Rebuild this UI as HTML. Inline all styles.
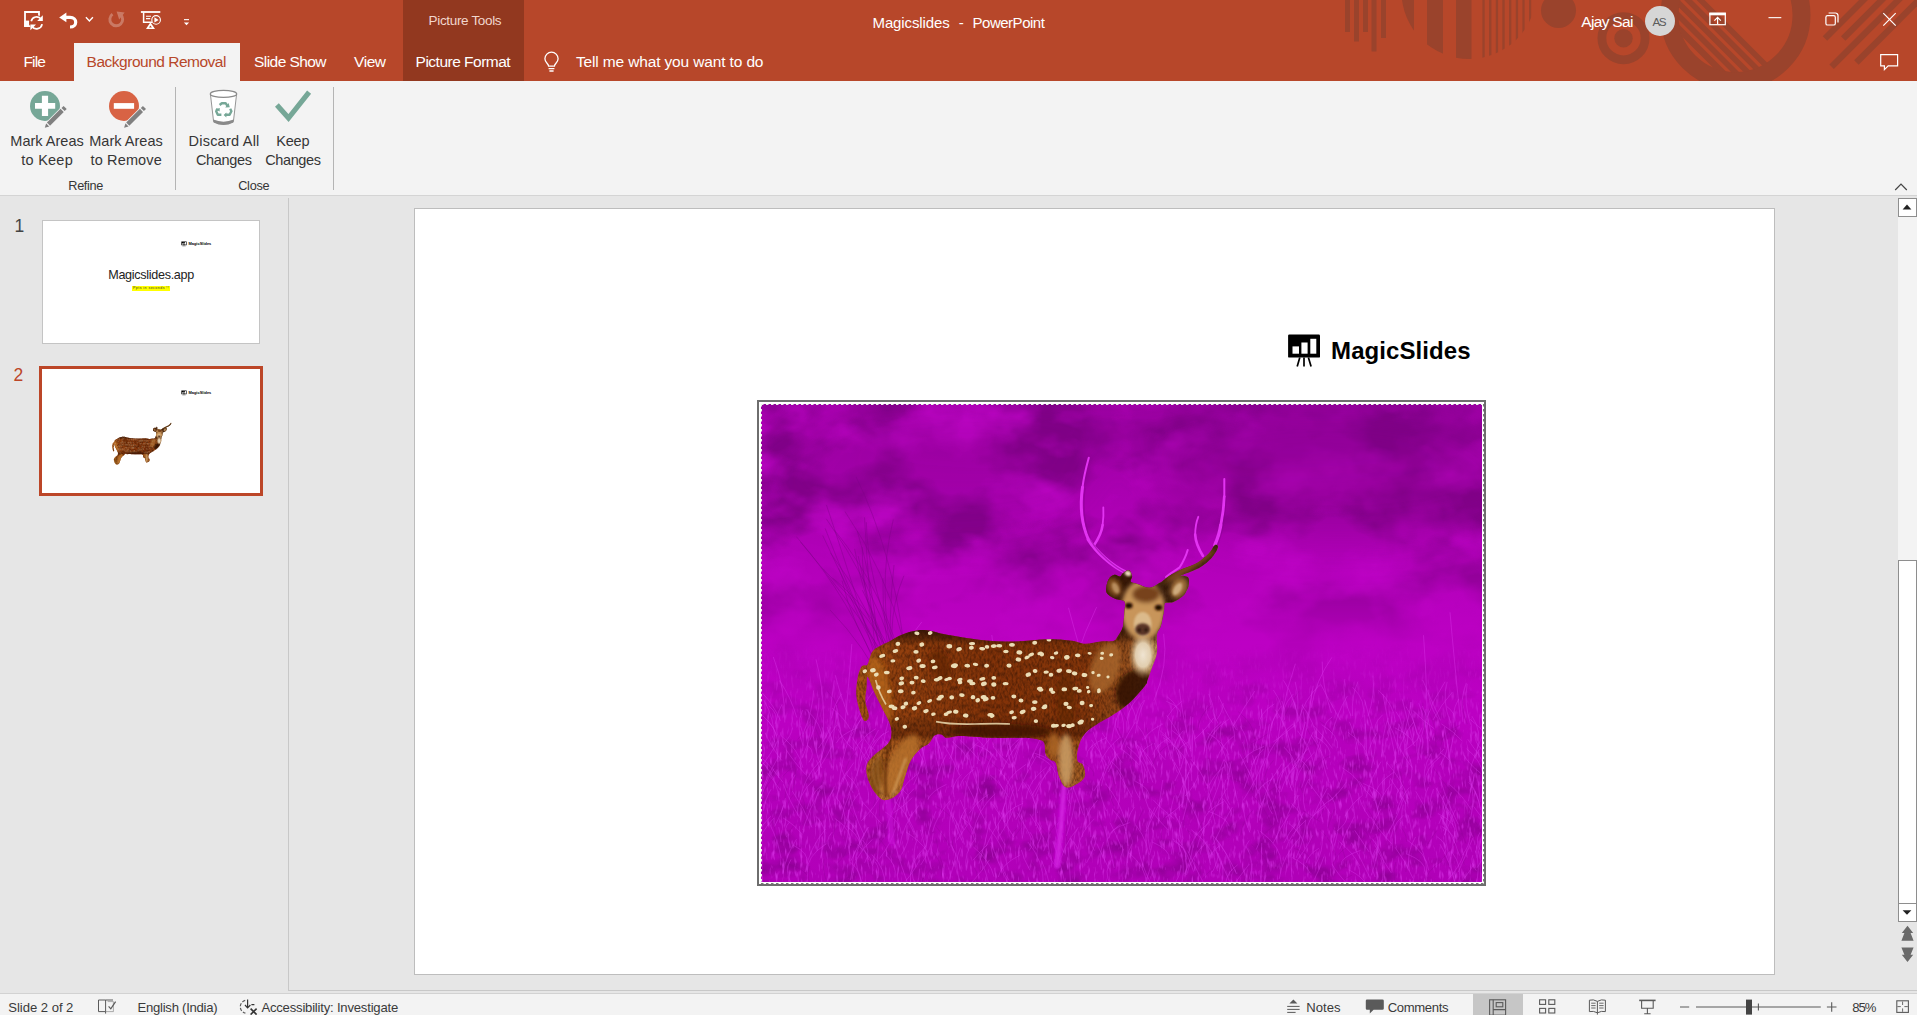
<!DOCTYPE html>
<html lang="en"><head><meta charset="utf-8"><title>Magicslides - PowerPoint</title>
<style>
html,body{margin:0;padding:0}
body{width:1917px;height:1015px;overflow:hidden;background:#E6E6E6;position:relative;
 font-family:"Liberation Sans",sans-serif;color:#333;font-size:14.5px}
.abs{position:absolute}
.t{position:absolute;white-space:nowrap;line-height:1}
#titlebar{left:0;top:0;width:1917px;height:81px;background:#B7472A}
#ptools{left:403px;top:0;width:121px;height:81px;background:#92381F}
#tabact{left:74px;top:43px;width:166px;height:38px;background:#F3F3F3}
#ribbon{left:0;top:81px;width:1917px;height:114px;background:#F3F3F3}
#ribline{left:0;top:195px;width:1917px;height:1px;background:#D4D4D4}
.sep{width:1px;background:#B4B4B4;top:87px;height:103px}
#leftdiv{left:288px;top:198px;width:1px;height:793px;background:#C8C8C8}
#botline{left:289px;top:990px;width:1628px;height:1px;background:#C8C8C8}
#status{left:0;top:994px;width:1917px;height:21px;background:#F3F3F3}
#statusline{left:0;top:993px;width:1917px;height:1px;background:#D2D2D2}
#slide{left:414px;top:208px;width:1359px;height:765px;background:#fff;border:1px solid #BDBDBD}
#th1{left:42px;top:220px;width:216px;height:122px;background:#fff;border:1px solid #C4C4C4}
#th2{left:39px;top:366px;width:218px;height:124px;background:#fff;border:3px solid #BC4628}
#vscroll{left:1898px;top:198px;width:19px;height:724px;background:#F3F3F3}
.sbtn{left:1898px;width:17px;height:17px;background:#fff;border:1px solid #8E8E8E}
#sthumb{left:1898px;top:560px;width:17px;height:342px;background:#fff;border:1px solid #8E8E8E}
.w{color:#fff}
svg{position:absolute;overflow:visible}
</style></head>
<body>
<div id="titlebar" class="abs"></div>
<svg class="abs" style="left:0;top:0" width="1917" height="81" viewBox="0 0 1917 81"><g fill="#9A432C"><clipPath id="cpA"><circle cx="1469" cy="-8.5" r="67.5"/></clipPath><clipPath id="cpB"><circle cx="1735.5" cy="15" r="57.6"/></clipPath><clipPath id="cpT"><rect x="0" y="0" width="1917" height="81"/></clipPath><rect x="1345" y="0" width="5" height="32"/><rect x="1354" y="0" width="5" height="41.5"/><rect x="1363" y="0" width="5" height="32"/><rect x="1371.5" y="0" width="5" height="51.5"/><rect x="1381" y="0" width="5" height="38"/><g clip-path="url(#cpA)"><rect x="1400" y="0" width="14" height="70"/><rect x="1427" y="0" width="16" height="70"/><rect x="1456" y="0" width="15.5" height="70"/><rect x="1482.4" y="0" width="2.3" height="70"/><rect x="1489" y="0" width="2.4" height="70"/><rect x="1495.8" y="0" width="2.3" height="70"/><rect x="1502.3" y="0" width="2.4" height="70"/><rect x="1509" y="0" width="2.3" height="70"/><rect x="1515.8" y="0" width="2.3" height="70"/><rect x="1522.4" y="0" width="2.2" height="70"/><rect x="1529" y="0" width="2.2" height="70"/></g><circle cx="1558.5" cy="10.5" r="17.5"/><circle cx="1623.5" cy="38.2" r="21.6" fill="none" stroke="#9A432C" stroke-width="8.8"/><circle cx="1623.5" cy="38.2" r="9.2"/><g clip-path="url(#cpT)"><circle cx="1735.5" cy="15" r="66" fill="none" stroke="#9A432C" stroke-width="18"/><g clip-path="url(#cpB)"><polygon points="1585.5,-60 1594.5,-60 1754.5,100 1745.5,100"/><polygon points="1599.1,-60 1607,-60 1767,100 1759.1,100"/><polygon points="1611.6,-60 1619.5,-60 1779.5,100 1771.6,100"/><polygon points="1624.1,-60 1632,-60 1792,100 1784.1,100"/><polygon points="1636.6,-60 1644.5,-60 1804.5,100 1796.6,100"/></g><polygon points="1822.78,36.275 1827.22,40.725 1907.22,-39.275 1902.78,-43.725"/><polygon points="1840.98,36.275 1845.42,40.725 1925.42,-39.275 1920.98,-43.725"/><polygon points="1829.38,64.475 1833.82,68.925 1913.82,-11.075 1909.38,-15.525"/><polygon points="1854.17,60.175 1858.62,64.625 1938.62,-15.375 1934.17,-19.825"/></g></g></svg>
<div id="ptools" class="abs"></div>
<div id="tabact" class="abs"></div>
<span class="t " style="left:428.60px;top:14.07px;font-size:13.50px;color:#F1D6CD;letter-spacing:-0.337px;">Picture Tools</span>
<span class="t " style="left:872.50px;top:15.30px;font-size:15.00px;color:#fff;letter-spacing:-0.116px;">Magicslides</span>
<span class="t " style="left:958.80px;top:15.30px;font-size:15.00px;color:#fff;">-</span>
<span class="t " style="left:972.50px;top:15.30px;font-size:15.00px;color:#fff;letter-spacing:-0.479px;">PowerPoint</span>
<span class="t " style="left:1581.30px;top:14.18px;font-size:15.50px;color:#fff;letter-spacing:-0.680px;">Ajay Sai</span>
<div class="abs" style="left:1645px;top:6px;width:30px;height:30px;border-radius:15px;background:#D6D6D6"></div>
<span class="t " style="left:1652.40px;top:15.70px;font-size:11.70px;color:#5C5C5C;letter-spacing:-1.508px;">AS</span>
<span class="t " style="left:23.40px;top:54.08px;font-size:15.50px;color:#fff;letter-spacing:-0.825px;">File</span>
<span class="t " style="left:86.60px;top:54.28px;font-size:15.50px;color:#B7472A;letter-spacing:-0.493px;">Background Removal</span>
<span class="t " style="left:254.10px;top:54.28px;font-size:15.50px;color:#fff;letter-spacing:-0.572px;">Slide Show</span>
<span class="t " style="left:354.10px;top:54.28px;font-size:15.50px;color:#fff;letter-spacing:-0.472px;">View</span>
<span class="t " style="left:415.60px;top:54.48px;font-size:15.50px;color:#fff;letter-spacing:-0.510px;">Picture Format</span>
<span class="t " style="left:575.90px;top:54.08px;font-size:15.50px;color:#fff;letter-spacing:-0.141px;">Tell me what you want to do</span>
<svg class="abs" style="left:20px;top:8px" width="28" height="24" viewBox="20 8 28 24" ><path d="M31,26 H25 V12 H39 V17.5" fill="none" stroke="#fff" stroke-width="1.8"/><rect x="24.2" y="20.6" width="5" height="6.2" fill="#fff"/><circle cx="36.7" cy="22.8" r="7.5" fill="#B7472A"/><path d="M31.2,21.2 A5.6,5.6 0 0 1 41.2,19.2" fill="none" stroke="#fff" stroke-width="1.7"/><path d="M42.1,24.2 A5.6,5.6 0 0 1 32,26.4" fill="none" stroke="#fff" stroke-width="1.7"/><path d="M42.8,15.2 V21 H37.2 Z" fill="#fff"/><path d="M30.4,30.2 V24.6 H36 Z" fill="#fff"/></svg>
<svg class="abs" style="left:56px;top:8px" width="40" height="24" viewBox="56 8 40 24" ><path d="M59.2,17.4 L66.4,12.6 V22.2 Z" fill="#fff"/><path d="M65,17.4 H70 C77.6,17.4 77.6,27 70,27" fill="none" stroke="#fff" stroke-width="3.2"/><path d="M85.9,17.3 L89.4,21 L92.9,17.3" fill="none" stroke="#fff" stroke-width="1.4"/></svg>
<svg class="abs" style="left:104px;top:8px" width="24" height="24" viewBox="104 8 24 24" ><g opacity="0.27"><path d="M112.5,14.2 A6.4,6.4 0 1 0 120.5,14.6" fill="none" stroke="#fff" stroke-width="2.9"/><path d="M116.6,11.6 L124.6,12.6 L119.2,19.6 Z" fill="#fff"/></g></svg>
<svg class="abs" style="left:138px;top:8px" width="26" height="24" viewBox="138 8 26 24" ><rect x="140.9" y="11.1" width="19.4" height="1.8" fill="#fff"/><path d="M143.6,12.5 V22.3 H152" fill="none" stroke="#fff" stroke-width="1.5"/><path d="M146,16.2 H151 M146,18.6 H150.2" stroke="#fff" stroke-width="1.1"/><circle cx="156.1" cy="19.9" r="4.3" fill="none" stroke="#fff" stroke-width="1.1"/><path d="M154.4,17.2 L158.6,19.9 L154.4,22.6 Z" fill="#fff"/><path d="M150.4,22.3 L146,29 H155 Z M150.4,25.6 L149,27.6 H151.9 Z" fill="#fff" fill-rule="evenodd"/></svg>
<svg class="abs" style="left:182px;top:16px" width="10" height="12" viewBox="182 16 10 12" ><rect x="184" y="19.1" width="5" height="1.1" fill="#fff"/><path d="M183.9,22.6 H189.1 L186.5,25.2 Z" fill="#fff"/></svg>
<svg class="abs" style="left:540px;top:50px" width="24" height="26" viewBox="540 50 24 26" ><path d="M548.6,66.2 C548.6,63.6 544.9,62.6 544.9,58.8 A6.6,6.6 0 0 1 558.1,58.8 C558.1,62.6 554.4,63.6 554.4,66.2 Z" fill="none" stroke="#fff" stroke-width="1.3"/><path d="M548.6,68.6 H554.4 M549.4,71 H553.6" stroke="#fff" stroke-width="1.3"/></svg>
<svg class="abs" style="left:1706px;top:10px" width="24" height="18" viewBox="1706 10 24 18" ><rect x="1709.9" y="13.3" width="15.4" height="11.4" fill="none" stroke="#fff" stroke-width="1.2"/><rect x="1709.3" y="12.7" width="16.6" height="2.6" fill="#fff"/><path d="M1717.6,24 V17.6 M1714.4,20.6 L1717.6,17.4 L1720.8,20.6" fill="none" stroke="#fff" stroke-width="1.2"/></svg>
<svg class="abs" style="left:1765px;top:10px" width="20" height="16" viewBox="1765 10 20 16" ><rect x="1768.5" y="17.1" width="12.8" height="1.1" fill="#fff"/></svg>
<svg class="abs" style="left:1822px;top:10px" width="20" height="18" viewBox="1822 10 20 18" ><rect x="1825.9" y="15.6" width="9.4" height="9.4" rx="1.6" fill="none" stroke="#fff" stroke-width="1.2"/><path d="M1828.6,13 H1835.4 A2.6,2.6 0 0 1 1838,15.6 V22.6" fill="none" stroke="#fff" stroke-width="1.2"/></svg>
<svg class="abs" style="left:1880px;top:10px" width="20" height="18" viewBox="1880 10 20 18" ><path d="M1883.3,13.2 L1895.7,25.6 M1895.7,13.2 L1883.3,25.6" stroke="#fff" stroke-width="1.2" fill="none"/></svg>
<svg class="abs" style="left:1878px;top:52px" width="24" height="22" viewBox="1878 52 24 22" ><path d="M1880.7,54.7 H1897.6 V65.8 H1888.2 L1884.4,69.6 V65.8 H1880.7 Z" fill="none" stroke="#fff" stroke-width="1.2"/></svg>
<div id="ribbon" class="abs"></div><div id="ribline" class="abs"></div>
<div class="abs sep" style="left:175px"></div><div class="abs sep" style="left:333px"></div>
<span class="t " style="left:10.30px;top:134.13px;font-size:14.50px;color:#363636;letter-spacing:0.008px;">Mark Areas</span>
<span class="t " style="left:21.30px;top:153.33px;font-size:14.50px;color:#363636;letter-spacing:0.236px;">to Keep</span>
<span class="t " style="left:89.20px;top:134.13px;font-size:14.50px;color:#363636;letter-spacing:0.030px;">Mark Areas</span>
<span class="t " style="left:90.50px;top:153.33px;font-size:14.50px;color:#363636;letter-spacing:0.148px;">to Remove</span>
<span class="t " style="left:188.50px;top:134.13px;font-size:14.50px;color:#363636;letter-spacing:0.231px;">Discard All</span>
<span class="t " style="left:196.00px;top:153.33px;font-size:14.50px;color:#363636;letter-spacing:-0.357px;">Changes</span>
<span class="t " style="left:276.30px;top:134.13px;font-size:14.50px;color:#363636;letter-spacing:-0.221px;">Keep</span>
<span class="t " style="left:265.20px;top:153.33px;font-size:14.50px;color:#363636;letter-spacing:-0.374px;">Changes</span>
<span class="t " style="left:68.30px;top:179.55px;font-size:12.70px;color:#363636;letter-spacing:-0.322px;">Refine</span>
<span class="t " style="left:238.20px;top:179.55px;font-size:12.70px;color:#363636;letter-spacing:-0.267px;">Close</span>
<svg class="abs" style="left:26px;top:86px" width="44" height="46" viewBox="26 86 44 46" ><circle cx="45" cy="106" r="15" fill="#76A797"/><path d="M35,103.1 H41.9 V95.8 H48.1 V103.1 H55.2 V108.8 H48.1 V116 H41.9 V108.8 H35 Z" fill="#fff"/><g stroke="#F3F3F3" stroke-width="1.6" stroke-linejoin="round" fill="#808080" paint-order="stroke"><polygon points="44.80,127.80 46.21,123.27 49.33,126.39"/><polygon points="46.92,122.57 60.64,108.85 63.75,111.96 50.03,125.68"/><polygon points="61.49,108.00 63.61,105.88 66.72,108.99 64.60,111.11"/></g></svg>
<svg class="abs" style="left:105px;top:86px" width="44" height="46" viewBox="105 86 44 46" ><circle cx="124" cy="106" r="15" fill="#D86344"/><rect x="113.8" y="103.1" width="20.3" height="5.7" fill="#fff"/><g stroke="#F3F3F3" stroke-width="1.6" stroke-linejoin="round" fill="#808080" paint-order="stroke"><polygon points="124.10,127.80 125.51,123.27 128.63,126.39"/><polygon points="126.22,122.57 139.94,108.85 143.05,111.96 129.33,125.68"/><polygon points="140.79,108.00 142.91,105.88 146.02,108.99 143.90,111.11"/></g></svg>
<svg class="abs" style="left:206px;top:86px" width="36" height="44" viewBox="206 86 36 44" ><path d="M210.4,94 L213.6,121.6 Q223.5,126.6 233.4,121.6 L236.6,94 Z" fill="#fff" stroke="#8A8A8A" stroke-width="0.9"/><path d="M213.3,119.6 Q223.5,123.8 233.7,119.6 L233.4,122.4 Q223.5,127.6 213.6,122.4 Z" fill="#8A8A8A"/><ellipse cx="223.5" cy="93.9" rx="13.2" ry="3.5" fill="#fff" stroke="#8A8A8A" stroke-width="1.2"/><g fill="none" stroke="#76A797" stroke-width="2.4" stroke-linejoin="round"><path d="M219.6,105 L221.8,103.2 H225.6 L227.6,106.2"/><path d="M230.2,108.8 L231.4,111.2 L229.6,114.8 H225.6"/><path d="M221.4,114.8 H217.8 L216.2,111.2 L217.6,108.6"/></g><path d="M225.2,107.4 L229.8,107.2 L228.6,103 Z M226.4,112.4 L226.4,117.4 L223.6,114.9 Z M215.4,109.2 L219.8,108 L219.6,111.6 Z" fill="#76A797"/></svg>
<svg class="abs" style="left:272px;top:88px" width="42" height="36" viewBox="272 88 42 36" ><path d="M276.9,105 L288.5,118 L309.1,92.2" fill="none" stroke="#76A797" stroke-width="5.1"/></svg>
<svg class="abs" style="left:1892px;top:180px" width="18" height="14" viewBox="1892 180 18 14" ><path d="M1895.2,190 L1901,184.2 L1906.8,190" fill="none" stroke="#444" stroke-width="1.2"/></svg>
<div id="leftdiv" class="abs"></div><div id="botline" class="abs"></div>
<span class="t " style="left:14.50px;top:217.99px;font-size:17.50px;color:#444;">1</span>
<span class="t " style="left:13.40px;top:366.79px;font-size:17.50px;color:#BC4628;">2</span>
<div id="th1" class="abs"></div><div id="th2" class="abs"></div>
<span class="t " style="left:108.20px;top:269.43px;font-size:12.60px;color:#222;letter-spacing:-0.303px;">Magicslides.app</span>
<div class="abs" style="left:131.6px;top:286.2px;width:38.5px;height:4.7px;background:#FFFF00"></div><span class="t " style="left:133.00px;top:287.05px;font-size:3.60px;color:#333;letter-spacing:0.434px;">Ppts in seconds !!</span>
<svg class="abs" style="left:180.55px;top:240.57px" width="31.34" height="6.27" viewBox="1286 332 190 38"><rect x="1288.1" y="334.6" width="31.9" height="23" rx="1.2" fill="#000"/><rect x="1292.5" y="346.4" width="6.5" height="7.3" fill="#fff"/><rect x="1301.4" y="342.5" width="6.2" height="11.2" fill="#fff"/><rect x="1310.3" y="338.8" width="6" height="14.9" fill="#fff"/><path d="M1299.8,357.4 L1297.2,366.5 M1304,357.4 V366.5 M1308.4,357.4 L1311.1,366.5" stroke="#000" stroke-width="1.7" fill="none"/><text x="1331.1" y="358.9" font-family="Liberation Sans, sans-serif" font-weight="bold" font-size="24" letter-spacing="0.078" fill="#000">MagicSlides</text></svg>
<svg class="abs" style="left:180.55px;top:389.67px" width="31.34" height="6.27" viewBox="1286 332 190 38"><rect x="1288.1" y="334.6" width="31.9" height="23" rx="1.2" fill="#000"/><rect x="1292.5" y="346.4" width="6.5" height="7.3" fill="#fff"/><rect x="1301.4" y="342.5" width="6.2" height="11.2" fill="#fff"/><rect x="1310.3" y="338.8" width="6" height="14.9" fill="#fff"/><path d="M1299.8,357.4 L1297.2,366.5 M1304,357.4 V366.5 M1308.4,357.4 L1311.1,366.5" stroke="#000" stroke-width="1.7" fill="none"/><text x="1331.1" y="358.9" font-family="Liberation Sans, sans-serif" font-weight="bold" font-size="24" letter-spacing="0.078" fill="#000">MagicSlides</text></svg>
<svg class="abs" style="left:0;top:0" width="300" height="520" viewBox="0 0 300 520"><g transform="translate(-28.06 333.50) scale(0.1638)"><use href="#deer"/></g></svg>
<div id="slide" class="abs"></div>
<svg class="abs" style="left:1286.00px;top:332.00px" width="190.00" height="38.00" viewBox="1286 332 190 38"><rect x="1288.1" y="334.6" width="31.9" height="23" rx="1.2" fill="#000"/><rect x="1292.5" y="346.4" width="6.5" height="7.3" fill="#fff"/><rect x="1301.4" y="342.5" width="6.2" height="11.2" fill="#fff"/><rect x="1310.3" y="338.8" width="6" height="14.9" fill="#fff"/><path d="M1299.8,357.4 L1297.2,366.5 M1304,357.4 V366.5 M1308.4,357.4 L1311.1,366.5" stroke="#000" stroke-width="1.7" fill="none"/><text x="1331.1" y="358.9" font-family="Liberation Sans, sans-serif" font-weight="bold" font-size="24" letter-spacing="0.078" fill="#000">MagicSlides</text></svg>
<svg class="abs" style="left:750px;top:395px" width="745" height="500" viewBox="750 395 745 500"><defs><clipPath id="deerclip"><path d="M889.2,641.5C892.8,639.6 895.7,637.3 900.0,635.5C904.3,633.7 908.2,632.3 913.0,631.3C917.8,630.3 920.5,629.6 926.6,630.2C932.7,630.8 937.2,633.0 947.0,634.7C956.8,636.4 968.8,638.7 981.0,639.9C993.2,641.1 1002.8,641.6 1015.0,641.5C1027.2,641.4 1038.8,639.4 1049.0,639.3C1059.2,639.2 1065.1,640.0 1071.6,640.8C1078.1,641.6 1079.9,643.7 1085.2,643.8C1090.5,643.9 1096.0,642.0 1101.0,641.5C1106.0,641.0 1110.2,642.0 1113.2,641.0C1116.2,640.0 1116.2,638.5 1117.9,636.2C1119.6,633.9 1121.4,631.0 1122.5,628.0C1123.6,625.0 1123.5,622.6 1123.8,619.7C1124.1,616.8 1124.2,614.6 1124.4,612.0C1124.6,609.4 1125.1,607.5 1125.0,605.5C1124.9,603.5 1125.5,602.0 1123.8,600.8C1122.1,599.6 1118.4,600.0 1115.6,598.9C1112.8,597.8 1110.2,596.4 1108.5,594.8C1106.8,593.2 1106.1,592.9 1106.1,590.1C1106.1,587.3 1107.0,582.3 1108.5,579.5C1110.0,576.7 1112.3,575.3 1114.4,574.8C1116.5,574.3 1118.5,576.7 1120.0,576.5C1121.5,576.3 1121.1,574.8 1122.6,573.6C1124.1,572.4 1126.9,569.6 1128.6,570.0C1130.3,570.4 1131.7,573.8 1132.1,575.9C1132.5,578.0 1129.8,580.3 1130.9,581.8C1132.0,583.3 1134.6,583.1 1138.0,584.2C1141.4,585.3 1146.0,588.0 1149.8,587.8C1153.6,587.6 1157.2,584.1 1159.3,583.0C1161.4,581.9 1159.6,583.3 1161.7,581.8C1163.8,580.3 1167.3,577.1 1171.1,574.8C1174.9,572.5 1178.2,570.9 1182.9,568.8C1187.6,566.7 1192.4,565.7 1197.1,562.9C1201.8,560.1 1205.7,556.7 1208.9,553.5C1212.1,550.3 1213.2,546.3 1214.8,545.2C1216.4,544.1 1218.5,545.3 1217.9,547.6C1217.3,549.9 1214.6,554.6 1211.3,558.2C1208.0,561.8 1204.2,564.9 1199.5,567.7C1194.8,570.5 1189.5,571.9 1185.3,573.6C1181.1,575.3 1177.3,577.0 1176.0,577.4C1174.7,577.8 1176.1,576.0 1178.2,575.9C1180.3,575.8 1185.8,575.6 1187.7,577.1C1189.6,578.6 1189.0,581.8 1188.8,584.2C1188.6,586.6 1187.7,588.4 1186.6,590.5C1185.5,592.6 1185.3,593.9 1182.9,596.0C1180.5,598.1 1176.7,600.6 1173.5,601.9C1170.3,603.2 1166.9,601.6 1165.2,603.1C1163.5,604.6 1164.5,607.3 1164.0,610.2C1163.5,613.1 1163.0,616.0 1162.4,619.0C1161.8,622.0 1161.5,623.9 1160.5,626.8C1159.5,629.7 1157.5,630.3 1156.9,635.0C1156.3,639.7 1157.7,647.0 1156.9,652.8C1156.1,658.6 1153.9,662.1 1152.2,667.0C1150.5,671.9 1148.8,676.6 1147.5,680.0C1146.2,683.4 1148.5,681.4 1145.0,685.7C1141.5,690.0 1134.2,698.5 1128.3,703.8C1122.4,709.1 1117.7,711.7 1112.4,715.2C1107.1,718.7 1103.7,719.8 1098.8,723.1C1093.9,726.4 1088.9,729.0 1085.2,733.3C1081.5,737.6 1079.8,742.0 1078.4,746.9C1077.0,751.8 1076.5,757.2 1077.3,760.5C1078.1,763.8 1081.6,762.1 1082.9,765.0C1084.2,767.9 1085.9,772.9 1084.7,776.4C1083.5,779.9 1079.5,782.4 1076.1,784.3C1072.7,786.2 1069.0,788.6 1065.9,787.2C1062.8,785.8 1060.9,780.8 1059.1,776.4C1057.3,772.0 1057.3,765.9 1055.7,762.8C1054.1,759.7 1051.9,761.0 1050.1,759.4C1048.3,757.8 1046.5,756.6 1045.5,753.7C1044.5,750.8 1045.4,745.9 1044.4,743.5C1043.4,741.1 1043.2,741.1 1039.9,740.1C1036.6,739.1 1034.9,738.2 1026.3,737.8C1017.7,737.4 1004.1,738.1 992.3,737.8C980.5,737.5 968.8,736.0 960.6,736.0C952.4,736.0 950.5,738.1 947.0,737.8C943.5,737.5 943.5,734.8 941.3,734.4C939.0,734.0 936.8,734.0 934.5,735.6C932.2,737.2 931.4,741.1 928.8,743.5C926.2,745.9 923.1,746.1 919.8,749.2C916.5,752.3 913.4,755.6 910.7,760.5C908.0,765.4 907.0,770.7 905.0,776.4C903.0,782.1 902.9,787.9 899.4,792.2C895.9,796.5 889.9,799.7 885.8,800.1C881.7,800.5 879.8,798.0 876.7,794.5C873.6,791.0 870.6,785.8 868.8,780.9C867.0,776.0 865.9,771.6 866.5,767.3C867.1,763.0 868.3,761.4 872.2,757.1C876.1,752.8 884.6,747.8 888.1,743.5C891.6,739.2 891.3,737.2 891.5,733.3C891.7,729.4 890.8,726.5 889.2,722.0C887.6,717.5 885.0,713.7 882.4,708.4C879.8,703.1 877.1,698.2 874.5,692.5C871.9,686.8 869.1,677.5 867.7,676.7C866.3,675.9 866.9,683.5 866.5,688.0C866.1,692.5 865.0,696.5 865.4,701.6C865.8,706.7 869.0,712.8 868.8,716.3C868.6,719.8 865.9,721.8 864.3,720.8C862.7,719.8 861.1,715.3 859.7,710.6C858.3,705.9 856.7,700.5 856.3,694.8C855.9,689.1 856.7,683.8 857.5,678.9C858.3,674.0 859.7,670.0 860.9,667.6C862.1,665.2 863.1,665.9 864.3,665.3C865.5,664.7 866.3,666.6 867.7,664.2C869.1,661.8 870.0,655.0 872.2,651.7C874.4,648.4 876.9,647.8 880.0,646.0C883.1,644.2 885.6,643.4 889.2,641.5Z"/></clipPath><linearGradient id="dg1" gradientUnits="userSpaceOnUse" x1="860" y1="0" x2="1160" y2="0"><stop offset="0" stop-color="#A65414"/><stop offset="0.12" stop-color="#93400E"/><stop offset="0.45" stop-color="#823208"/><stop offset="0.75" stop-color="#86360A"/><stop offset="0.9" stop-color="#95501E"/><stop offset="1" stop-color="#B98A52"/></linearGradient><linearGradient id="dg2" gradientUnits="userSpaceOnUse" x1="0" y1="630" x2="0" y2="800"><stop offset="0" stop-color="#2A1004" stop-opacity="0.85"/><stop offset="0.045" stop-color="#2A1004" stop-opacity="0.5"/><stop offset="0.09" stop-color="#2A1004" stop-opacity="0"/><stop offset="0.5" stop-color="#000" stop-opacity="0"/><stop offset="0.62" stop-color="#3A1404" stop-opacity="0.35"/><stop offset="0.66" stop-color="#C88A3C" stop-opacity="0.25"/><stop offset="1" stop-color="#D09850" stop-opacity="0.55"/></linearGradient><radialGradient id="dg3" gradientUnits="userSpaceOnUse" cx="1143" cy="655" r="24" gradientTransform="translate(1143 655) scale(0.62 1) translate(-1143 -655)"><stop offset="0" stop-color="#EFE4D2"/><stop offset="0.5" stop-color="#E6D4B6" stop-opacity="0.95"/><stop offset="1" stop-color="#C69A5E" stop-opacity="0"/></radialGradient><filter id="dblur" x="-20%" y="-20%" width="140%" height="140%"><feGaussianBlur stdDeviation="2.2"/></filter><filter id="dblur1" x="-20%" y="-20%" width="140%" height="140%"><feGaussianBlur stdDeviation="0.9"/></filter><filter id="fur" color-interpolation-filters="sRGB" filterUnits="userSpaceOnUse" x="850" y="540" width="380" height="270"><feTurbulence type="fractalNoise" baseFrequency="0.5 0.22" numOctaves="2" seed="3"/><feColorMatrix type="matrix" values="0 0 0 0 0.16  0 0 0 0 0.06  0 0 0 0 0.01  0 1.1 0 0 -0.38"/></filter><filter id="dblur0" x="-5%" y="-5%" width="110%" height="110%"><feGaussianBlur stdDeviation="0.35"/></filter><linearGradient id="bg" x1="0" y1="0" x2="0" y2="1"><stop offset="0" stop-color="#9E00A5"/><stop offset="0.1" stop-color="#A800AF"/><stop offset="0.35" stop-color="#B400BB"/><stop offset="0.5" stop-color="#BD00C4"/><stop offset="0.65" stop-color="#BC00C3"/><stop offset="0.8" stop-color="#B500BC"/><stop offset="1" stop-color="#B200B9"/></linearGradient><linearGradient id="mtop" x1="0" y1="0" x2="0" y2="1"><stop offset="0" stop-color="#fff"/><stop offset="0.28" stop-color="#fff" stop-opacity="0.9"/><stop offset="0.5" stop-color="#fff" stop-opacity="0.15"/><stop offset="1" stop-color="#fff" stop-opacity="0.04"/></linearGradient><linearGradient id="mbot" x1="0" y1="0" x2="0" y2="1"><stop offset="0" stop-color="#fff" stop-opacity="0"/><stop offset="0.5" stop-color="#fff" stop-opacity="0"/><stop offset="0.7" stop-color="#fff" stop-opacity="0.9"/><stop offset="1" stop-color="#fff"/></linearGradient><mask id="maskTop" maskUnits="userSpaceOnUse" x="761" y="404" width="721" height="478"><rect x="761" y="404" width="721" height="478" fill="url(#mtop)"/></mask><mask id="maskBot" maskUnits="userSpaceOnUse" x="761" y="404" width="721" height="478"><rect x="761" y="404" width="721" height="478" fill="url(#mbot)"/></mask><filter id="clouds" color-interpolation-filters="sRGB" filterUnits="userSpaceOnUse" x="761" y="404" width="721" height="478"><feTurbulence type="fractalNoise" baseFrequency="0.011 0.017" numOctaves="4" seed="4"/><feColorMatrix type="matrix" values="0 0 0 0 0.5  0 0 0 0 0  0 0 0 0 0.53  3.3 0 0 0 -1.35"/></filter><filter id="cloudl" color-interpolation-filters="sRGB" filterUnits="userSpaceOnUse" x="761" y="404" width="721" height="478"><feTurbulence type="fractalNoise" baseFrequency="0.013 0.02" numOctaves="4" seed="17"/><feColorMatrix type="matrix" values="0 0 0 0 0.77  0 0 0 0 0.02  0 0 0 0 0.8  0 2.6 0 0 -1.2"/></filter><filter id="grassn" color-interpolation-filters="sRGB" filterUnits="userSpaceOnUse" x="761" y="404" width="721" height="478"><feTurbulence type="fractalNoise" baseFrequency="0.035 0.05" numOctaves="3" seed="9"/><feColorMatrix type="matrix" values="0 0 0 0 0.5  0 0 0 0 0  0 0 0 0 0.53  0 1.8 0 0 -0.86"/></filter><filter id="grassl" color-interpolation-filters="sRGB" filterUnits="userSpaceOnUse" x="761" y="404" width="721" height="478"><feTurbulence type="fractalNoise" baseFrequency="0.33 0.10" numOctaves="2" seed="21"/><feColorMatrix type="matrix" values="0 0 0 0 0.84  0 0 0 0 0.2  0 0 0 0 0.9  0 0 2.6 0 -1.42"/></filter><filter id="bigblur" x="-30%" y="-60%" width="160%" height="220%"><feGaussianBlur stdDeviation="22"/></filter><clipPath id="picclip"><rect x="761" y="404" width="721" height="478"/></clipPath></defs><rect x="758" y="401" width="727" height="484" fill="#fff" stroke="#6E6E6E" stroke-width="2"/><g clip-path="url(#picclip)"><rect x="761" y="404" width="721" height="478" fill="url(#bg)"/><g mask="url(#maskTop)"><rect x="761" y="404" width="721" height="478" filter="url(#clouds)"/><rect x="761" y="404" width="721" height="478" filter="url(#cloudl)"/></g><g filter="url(#bigblur)" fill="#7C0084"><ellipse cx="1340" cy="475" rx="190" ry="62" opacity="0.42"/><ellipse cx="1150" cy="430" rx="340" ry="24" opacity="0.2"/><ellipse cx="930" cy="480" rx="170" ry="50" opacity="0.2"/></g><g mask="url(#maskBot)"><rect x="761" y="404" width="721" height="478" filter="url(#grassn)"/><rect x="761" y="404" width="721" height="478" filter="url(#grassl)"/></g><path d="M884.1,674.8 Q850.9,622.9 842.0,580.5M888.8,669.8 Q870.3,605.4 830.4,552.8M879.8,671.6 Q851.4,579.8 826.4,504.8M894.5,669.8 Q876.2,587.2 893.3,519.5M888.6,668.4 Q861.4,601.8 862.3,547.2M881.2,654.7 Q847.7,589.2 822.7,535.5M903.2,677.1 Q873.2,617.5 823.0,568.7M891.9,674.3 Q881.9,628.0 862.4,590.2M890.7,680.1 Q857.9,618.6 838.6,568.3M897.2,684.6 Q869.3,613.9 858.2,556.0M904.1,642.3 Q885.4,570.4 845.0,511.5M903.9,675.1 Q887.8,595.4 834.5,530.1M886.9,692.3 Q865.8,647.0 830.0,609.9M877.7,640.6 Q872.4,580.4 857.3,531.2M878.2,675.6 Q868.2,588.6 864.5,517.4M888.2,653.7 Q862.2,596.0 854.6,548.9M895.2,654.9 Q870.1,580.0 826.3,518.8M901.2,693.5 Q881.2,628.7 903.9,575.7M885.0,657.1 Q845.4,593.9 800.5,542.1M891.7,685.0 Q887.6,619.0 894.0,565.0M896.4,690.3 Q881.8,628.7 882.9,578.3M881.5,680.2 Q852.4,601.2 796.4,536.6M903.5,642.0 Q892.2,551.2 856.1,476.9M885.0,667.3 Q849.0,590.8 825.1,528.3M893.7,660.3 Q877.3,615.0 832.7,578.0M896.3,648.0 Q867.5,578.8 866.3,522.2" fill="none" stroke="#7E0086" stroke-width="0.8" opacity="0.5"/><path d="M1402.5,789.8 Q1390.7,737.1 1382.9,693.9M1153.9,700.8 Q1168.8,664.0 1163.6,633.8M1261.9,780.3 Q1263.4,749.2 1293.0,723.8M940.1,759.2 Q937.0,726.4 910.9,699.6M802.4,757.5 Q815.2,731.0 807.8,709.3M1062.4,718.4 Q1071.9,657.2 1096.6,607.1M1297.8,722.0 Q1296.2,699.1 1283.5,680.4M1331.4,713.0 Q1321.9,684.8 1322.2,661.7M1013.1,767.4 Q1024.0,729.4 1035.2,698.3M1427.4,753.0 Q1427.6,688.2 1423.5,635.2M901.9,718.4 Q922.1,680.9 931.6,650.3M1091.0,731.7 Q1092.7,695.3 1100.6,665.5M1484.8,761.9 Q1486.7,724.1 1494.3,693.1M1460.1,716.6 Q1454.1,659.2 1450.0,612.3M784.8,722.5 Q785.1,686.5 773.3,657.0M844.5,727.5 Q849.1,681.6 851.8,644.1M882.4,723.4 Q885.0,667.6 921.8,621.9M817.8,779.2 Q830.3,713.3 816.0,659.4M1191.8,781.2 Q1192.8,757.3 1163.4,737.7M1098.4,709.7 Q1080.8,653.7 1068.5,607.8M1300.5,766.8 Q1307.0,722.2 1313.2,685.7M945.9,731.6 Q950.0,682.2 932.3,641.8M1428.9,756.5 Q1428.3,727.2 1418.8,703.2M1082.8,735.4 Q1078.5,712.6 1080.1,693.9M838.6,788.8 Q842.8,732.8 876.1,686.9M1256.4,764.7 Q1266.1,731.8 1268.1,704.9M1190.7,749.1 Q1182.3,715.9 1179.3,688.8M1122.7,737.6 Q1128.6,706.5 1096.7,681.1M1017.3,779.7 Q1003.0,718.3 998.7,668.1M924.1,700.3 Q933.7,668.5 937.2,642.6M882.3,747.4 Q893.7,697.1 902.9,656.0M1311.1,707.8 Q1315.9,680.1 1331.9,657.4M1275.6,765.5 Q1279.4,709.5 1295.4,663.7M1417.4,760.3 Q1421.3,717.1 1445.1,681.7M1008.5,753.5 Q997.6,688.3 991.8,635.0M830.8,758.5 Q827.9,715.5 834.3,680.4" fill="none" stroke="#D630E6" stroke-width="0.9" opacity="0.5"/><path d="M929.6,738.9 Q924.8,728.2 910.8,719.5M1147.3,752.1 Q1149.3,738.5 1146.1,727.4M1336.0,855.8 Q1332.1,841.3 1320.0,829.4M1245.3,753.2 Q1242.8,742.8 1246.1,734.3M815.5,768.6 Q824.7,757.6 826.5,748.6M1376.8,871.8 Q1378.3,853.3 1377.2,838.2M776.2,842.5 Q775.7,826.0 770.0,812.4M825.8,879.4 Q821.9,868.2 824.1,859.1M1394.8,882.0 Q1392.5,871.1 1395.7,862.1M1271.6,825.3 Q1265.9,808.6 1252.3,795.0M1467.3,724.1 Q1461.2,710.4 1462.4,699.1M975.6,883.7 Q979.7,875.3 974.6,868.5M835.4,723.8 Q831.4,710.3 840.4,699.3M1371.0,850.5 Q1373.0,837.1 1360.7,826.2M917.1,889.9 Q922.5,877.1 933.4,866.6M1200.2,880.1 Q1203.6,868.8 1192.8,859.6M1485.8,741.7 Q1485.4,724.9 1496.2,711.1M926.6,729.9 Q925.6,713.3 909.9,699.8M1339.7,887.8 Q1338.4,880.8 1352.1,875.1M836.6,863.8 Q845.3,856.5 846.1,850.5M1109.8,791.8 Q1117.2,774.5 1115.2,760.3M1263.0,795.9 Q1270.8,789.8 1278.7,784.8M857.0,837.4 Q852.2,828.3 854.6,820.9M815.8,799.5 Q822.5,784.6 824.2,772.3M1425.6,846.7 Q1431.7,837.9 1436.6,830.7M840.1,722.5 Q840.6,705.0 827.0,690.6M1450.9,791.3 Q1440.7,778.9 1433.9,768.7M1380.2,826.0 Q1371.4,817.0 1367.9,809.7M1317.7,766.3 Q1319.4,760.1 1330.6,755.0M879.3,816.1 Q879.1,805.8 880.4,797.3M1152.7,765.4 Q1154.7,753.2 1170.9,743.3M1062.7,798.6 Q1062.4,787.1 1056.4,777.8M1441.0,745.5 Q1440.8,734.1 1460.2,724.8M1264.4,782.5 Q1264.2,770.3 1273.5,760.4M803.6,828.7 Q808.3,810.2 801.8,795.0M1132.6,835.5 Q1137.6,821.2 1143.3,809.6M1259.0,841.0 Q1264.9,832.2 1274.3,825.0M1123.6,827.3 Q1125.5,817.3 1113.3,809.1M910.8,780.8 Q905.9,767.5 910.6,756.6M955.0,850.3 Q950.1,843.0 954.3,837.0M811.1,886.3 Q805.6,875.0 809.8,865.8M873.1,807.7 Q877.1,789.9 890.6,775.3M1131.3,757.5 Q1124.7,741.0 1116.9,727.5M896.0,845.7 Q893.2,828.7 893.6,814.8M1428.7,736.9 Q1431.5,721.3 1421.5,708.5M943.6,868.1 Q937.8,851.4 936.2,837.7M1220.0,732.9 Q1219.7,719.8 1212.3,709.0M832.4,837.1 Q835.9,828.1 835.4,820.7M877.8,775.3 Q884.8,760.4 885.4,748.2M776.6,786.2 Q781.2,776.1 791.9,767.8M996.1,747.1 Q988.4,735.7 989.7,726.4M1217.8,871.1 Q1221.8,860.3 1215.8,851.4M1456.8,883.3 Q1451.3,868.0 1444.1,855.4M1004.6,856.3 Q1004.2,840.4 1017.3,827.4M921.6,888.9 Q921.8,878.9 925.3,870.7M1282.3,720.9 Q1289.6,704.7 1298.7,691.5M1013.6,837.8 Q1020.4,829.5 1024.4,822.8M1191.3,847.8 Q1199.4,833.2 1202.1,821.2M1313.3,874.8 Q1304.7,859.9 1296.6,847.7M1424.2,735.1 Q1422.5,718.1 1433.0,704.2M1406.5,841.7 Q1406.7,833.4 1400.2,826.5M1214.1,819.1 Q1216.2,802.3 1206.8,788.6M1464.3,864.6 Q1461.3,853.3 1454.1,844.1M1046.9,833.4 Q1039.5,826.8 1038.6,821.3M845.3,772.8 Q847.3,760.2 857.0,749.8M1407.1,804.5 Q1403.0,786.4 1400.5,771.5M873.6,854.4 Q879.0,841.0 891.6,830.1M1317.1,748.0 Q1308.2,730.2 1300.0,715.6M1482.3,732.0 Q1483.0,713.9 1502.0,699.0M1063.3,854.8 Q1068.7,836.5 1065.0,821.5M1066.9,846.9 Q1065.3,840.4 1073.2,835.2M1286.1,768.0 Q1282.3,762.2 1284.1,757.4M1127.1,721.1 Q1122.1,709.9 1115.9,700.8M1203.8,845.7 Q1200.4,833.9 1200.9,824.2M1202.4,846.0 Q1200.3,837.3 1187.4,830.2M951.3,848.6 Q944.5,835.8 935.0,825.3M1440.3,861.7 Q1452.1,847.6 1460.1,836.1M1331.8,868.4 Q1333.9,856.3 1347.5,846.4M1448.3,886.8 Q1456.0,870.5 1466.7,857.2M1254.6,739.0 Q1254.5,723.9 1238.1,711.6M1347.0,868.9 Q1345.6,853.6 1338.2,841.1M1114.5,869.0 Q1116.1,855.6 1110.9,844.7M1327.8,828.0 Q1330.6,817.6 1334.4,809.1M832.9,766.1 Q828.4,758.6 833.4,752.6M1316.7,820.4 Q1322.5,813.1 1324.8,807.2M779.2,844.7 Q789.0,832.9 795.1,823.3M1209.3,855.3 Q1214.5,847.3 1218.8,840.8M1305.0,796.7 Q1299.5,788.1 1300.2,781.1M1241.0,835.3 Q1241.9,821.7 1252.5,810.4M1200.8,855.6 Q1194.3,841.8 1187.8,830.5M983.3,773.1 Q978.4,758.6 978.4,746.7M1452.1,818.7 Q1446.7,801.2 1449.3,786.8M807.0,875.0 Q803.1,869.2 790.0,864.4M1056.0,726.6 Q1053.0,716.6 1059.4,708.4M1030.4,761.6 Q1036.2,749.5 1046.0,739.5M1310.2,858.8 Q1309.2,853.1 1294.1,848.5M1116.3,790.8 Q1113.1,773.9 1106.4,760.1M1342.7,840.5 Q1344.2,834.1 1333.1,828.8M1205.9,787.3 Q1210.8,770.0 1207.0,755.8M955.3,824.4 Q951.2,813.9 935.4,805.3M1133.3,775.3 Q1133.9,765.6 1130.0,757.7M1466.1,843.7 Q1458.0,825.7 1458.3,811.0M868.8,862.8 Q877.8,855.9 879.2,850.4M1333.4,803.3 Q1333.8,795.1 1347.0,788.4M759.9,801.4 Q766.0,783.7 779.7,769.2M784.9,799.1 Q785.3,787.8 791.1,778.6M1053.9,865.3 Q1051.5,849.3 1044.0,836.2M787.9,805.4 Q788.1,799.8 793.1,795.1M1439.9,806.1 Q1441.7,798.4 1450.2,792.1M1163.6,843.5 Q1158.5,832.7 1164.7,823.9M982.0,732.4 Q978.3,720.3 981.3,710.4M1020.4,721.7 Q1022.5,703.7 1035.1,689.0M1483.2,844.1 Q1483.2,831.9 1475.4,821.9M1364.3,854.2 Q1365.4,842.7 1379.2,833.4M1337.3,886.7 Q1335.4,880.7 1323.9,875.7M1251.2,743.8 Q1262.2,738.0 1268.3,733.3M1425.0,730.7 Q1422.8,715.4 1422.8,702.8M976.3,840.7 Q966.7,830.0 962.9,821.2M791.4,791.7 Q797.8,776.7 794.4,764.3M1405.8,872.0 Q1408.3,859.4 1406.4,849.1M1221.0,749.6 Q1220.4,736.9 1219.2,726.5M1114.2,806.3 Q1107.8,792.8 1106.7,781.8M1487.4,847.8 Q1494.8,838.6 1500.5,831.1M997.9,768.3 Q989.1,760.2 978.6,753.6M1424.5,885.1 Q1424.8,871.2 1443.5,859.9M1157.1,885.0 Q1156.6,876.0 1138.0,868.7M1202.4,879.0 Q1207.4,872.4 1215.7,867.0M1391.7,773.4 Q1391.4,767.6 1397.1,762.8M870.3,746.3 Q874.9,739.6 874.6,734.1M822.7,752.5 Q820.7,736.1 812.5,722.7M892.7,859.0 Q885.8,845.8 876.3,835.0M1247.5,760.4 Q1240.6,753.1 1243.4,747.2M797.7,739.5 Q806.2,730.0 810.3,722.3M1045.4,845.8 Q1047.8,829.4 1064.4,816.0M1269.8,872.4 Q1268.3,857.1 1251.5,844.5M1320.0,821.6 Q1309.1,815.6 1303.2,810.6M1161.8,821.7 Q1164.7,814.8 1175.2,809.2M857.0,819.6 Q850.1,810.6 845.6,803.2M1334.1,736.8 Q1331.8,728.2 1319.7,721.1M1252.9,792.8 Q1252.3,785.3 1233.7,779.1M1197.8,730.3 Q1198.2,716.4 1211.1,705.0M1449.3,748.6 Q1454.1,737.3 1446.8,728.1M1108.0,845.4 Q1104.9,830.4 1099.3,818.1M1093.7,776.3 Q1095.5,768.2 1080.3,761.6M1435.9,747.3 Q1437.1,728.7 1429.5,713.5M1098.7,800.3 Q1093.3,789.1 1080.0,780.0M941.4,876.4 Q942.8,862.5 932.6,851.2M1183.6,828.0 Q1182.9,812.8 1192.8,800.3M1393.0,846.2 Q1392.8,830.7 1402.8,818.0M1476.0,843.6 Q1471.1,826.0 1467.4,811.6" fill="none" stroke="#8C0094" stroke-width="0.9" opacity="0.3"/><path d="M1212.8,844.8 Q1222.5,824.0 1232.3,807.0M1432.9,720.1 Q1441.1,704.7 1452.4,692.1M1417.2,734.8 Q1414.5,719.4 1406.0,706.7M1176.8,717.3 Q1180.6,706.0 1167.1,696.8M1317.8,742.9 Q1314.9,722.1 1301.9,705.0M848.1,715.3 Q839.7,693.2 835.3,675.2M1477.1,867.7 Q1483.8,855.2 1497.4,845.0M1253.2,750.8 Q1263.2,727.6 1261.6,708.6M1411.9,767.3 Q1401.8,753.6 1397.2,742.5M802.9,767.7 Q799.2,750.1 781.0,735.6M1003.4,769.2 Q1000.2,748.0 1002.5,730.7M1108.7,838.3 Q1107.3,829.7 1129.6,822.6M1306.1,862.9 Q1307.8,854.9 1318.8,848.3M1180.2,716.6 Q1183.3,708.1 1166.2,701.2M899.4,847.3 Q902.8,824.2 918.9,805.4M1015.8,806.8 Q1014.6,786.3 998.5,769.6M1341.0,865.4 Q1340.3,857.1 1360.6,850.3M1005.4,821.9 Q1010.1,799.0 998.4,780.4M1155.7,769.7 Q1144.7,756.8 1141.5,746.2M864.4,835.6 Q852.7,811.5 849.5,791.7M1480.2,808.4 Q1478.3,794.0 1468.7,782.2M1362.3,794.7 Q1363.1,780.1 1342.8,768.1M779.1,801.4 Q777.9,779.8 762.8,762.2M1453.1,825.3 Q1446.9,804.6 1435.8,787.7M864.7,862.8 Q872.1,850.3 862.6,840.0M1381.4,885.8 Q1384.9,870.6 1380.9,858.2M1107.1,765.9 Q1100.5,751.6 1091.5,739.8M1481.5,883.0 Q1478.9,864.9 1481.4,850.2M820.5,762.7 Q823.1,742.1 836.7,725.2M1332.7,850.6 Q1339.0,831.4 1339.9,815.8M1022.1,838.3 Q1026.2,825.9 1021.5,815.9M1262.8,766.4 Q1266.1,743.1 1269.4,724.1M763.5,810.7 Q765.2,798.9 771.1,789.2M1355.3,828.3 Q1355.6,807.4 1348.6,790.4M1297.3,859.9 Q1307.7,846.5 1312.4,835.4M1260.9,885.8 Q1261.6,862.3 1261.7,843.1M877.1,861.4 Q879.9,838.2 876.1,819.3M1284.0,842.8 Q1289.0,832.3 1296.3,823.7M1244.2,788.6 Q1250.0,770.6 1256.3,755.9M1284.5,719.8 Q1286.1,709.5 1281.9,701.0M916.0,835.0 Q909.5,816.9 895.8,802.1M921.3,724.5 Q913.8,714.6 913.3,706.5M897.1,721.2 Q897.3,705.9 891.9,693.3M1188.8,756.6 Q1180.7,734.0 1166.8,715.5M959.7,786.8 Q962.1,777.2 974.3,769.3M781.5,822.4 Q779.5,813.1 783.5,805.5M1182.0,882.7 Q1185.9,861.5 1178.4,844.1M1227.1,779.7 Q1229.4,769.6 1231.3,761.4M1458.6,884.4 Q1462.9,866.7 1452.0,852.1M755.7,733.9 Q751.5,716.8 760.8,702.9M1217.7,871.0 Q1212.4,857.1 1214.6,845.7M969.2,885.2 Q982.0,871.2 989.5,859.8M1192.9,760.5 Q1191.5,736.6 1192.8,717.0M989.6,887.2 Q986.4,871.4 980.2,858.5M844.6,823.8 Q846.4,808.8 835.5,796.5M1362.7,717.3 Q1366.7,700.8 1352.7,687.3M1329.7,758.0 Q1333.0,745.9 1314.5,736.0M970.5,821.4 Q974.1,805.9 976.9,793.2M1301.5,735.7 Q1299.4,715.4 1292.7,698.9M1002.0,766.9 Q999.4,750.5 1000.5,737.0M1302.6,818.4 Q1298.6,810.1 1291.7,803.3M1428.7,870.4 Q1426.7,853.7 1407.3,840.0M1069.4,815.7 Q1070.8,796.4 1075.2,780.5M1425.1,782.5 Q1424.9,768.3 1440.6,756.7M972.9,860.3 Q980.4,851.5 987.7,844.3M1073.1,765.1 Q1072.8,744.5 1091.2,727.7M1106.6,811.1 Q1098.9,795.2 1099.2,782.2M1185.6,857.1 Q1187.2,848.2 1173.7,841.0M1336.9,831.1 Q1347.5,823.0 1346.7,816.4M1488.8,837.7 Q1488.8,829.2 1503.8,822.3M1229.6,881.6 Q1221.5,862.2 1213.5,846.3M1429.7,741.2 Q1423.2,723.4 1425.9,708.9M1212.5,722.6 Q1204.0,713.1 1207.2,705.4M797.3,815.7 Q796.5,795.7 814.0,779.4M1072.3,770.0 Q1079.2,752.4 1071.8,738.0M1030.0,724.8 Q1027.5,705.6 1014.7,689.8M1126.8,874.3 Q1124.6,857.5 1132.1,843.7M1160.5,759.5 Q1154.8,739.4 1161.2,723.0M927.3,780.0 Q926.5,760.1 913.2,743.9M1236.4,729.9 Q1225.0,711.2 1218.4,695.9M1191.6,756.8 Q1188.5,734.6 1190.7,716.4M1340.4,720.2 Q1328.9,700.5 1320.8,684.4M1454.8,834.2 Q1457.2,822.8 1437.9,813.5M1243.8,858.6 Q1243.1,848.6 1249.3,840.4M927.7,773.3 Q923.9,755.5 921.1,740.9M855.3,860.4 Q858.2,842.1 868.7,827.0M1380.9,805.6 Q1385.7,788.1 1384.1,773.8M1045.7,732.0 Q1034.4,723.7 1032.6,717.0M1408.6,799.2 Q1401.5,778.9 1386.6,762.4M1409.0,823.4 Q1402.1,808.6 1407.5,796.5M868.7,742.8 Q873.3,729.0 863.7,717.6M866.8,759.5 Q858.9,747.2 851.9,737.1M927.8,799.4 Q931.4,791.1 946.5,784.4M1444.4,835.3 Q1451.1,816.5 1443.1,801.1M841.7,832.0 Q847.6,819.5 849.3,809.3M875.0,750.2 Q864.7,742.1 863.1,735.4M1049.8,885.4 Q1046.8,871.7 1041.5,860.5M963.1,843.2 Q954.5,823.6 948.3,807.6M1249.1,879.6 Q1255.7,861.2 1246.0,846.2M759.6,725.7 Q751.1,705.1 755.7,688.3M1158.1,888.2 Q1149.6,871.9 1151.5,858.6M807.3,872.3 Q806.0,856.5 826.5,843.6M933.9,723.8 Q924.2,709.6 914.6,697.9M1054.5,768.5 Q1055.9,760.0 1034.1,753.0M886.8,804.0 Q880.6,789.7 888.2,777.9M985.7,733.9 Q992.8,717.3 1004.2,703.6M1384.7,752.5 Q1385.0,744.5 1386.5,738.0M1175.0,780.9 Q1184.6,762.9 1184.9,748.2M981.1,793.6 Q971.3,772.2 968.9,754.8M984.1,730.3 Q985.3,709.9 998.2,693.2M850.4,729.3 Q843.8,717.6 832.1,708.0M1179.1,757.9 Q1174.5,749.2 1187.9,742.1M901.9,765.1 Q895.3,751.2 884.2,739.8M985.7,846.7 Q993.4,829.8 1003.2,816.0M1313.4,815.6 Q1320.1,800.6 1327.3,788.3M1456.8,842.4 Q1458.7,823.1 1446.5,807.4M1036.1,737.8 Q1027.9,729.0 1021.5,721.8M1251.8,765.0 Q1256.2,756.2 1263.4,749.1M775.2,723.9 Q779.1,714.0 768.9,706.0M1452.7,822.1 Q1449.5,810.6 1449.5,801.2M997.8,717.2 Q1005.8,699.8 1012.2,685.6M825.0,807.8 Q826.9,797.3 834.3,788.7M1444.8,854.1 Q1449.1,844.4 1436.8,836.5M1093.8,791.0 Q1104.3,776.0 1105.6,763.7M1146.5,884.7 Q1146.3,867.2 1129.0,852.8M1063.3,724.2 Q1058.4,700.3 1042.7,680.8M1109.3,869.3 Q1101.9,855.1 1096.8,843.5M902.8,813.4 Q902.0,799.8 913.9,788.7M1013.6,758.4 Q1023.6,734.5 1028.5,715.0M1209.3,785.2 Q1213.6,775.1 1223.9,766.9M782.7,744.7 Q792.0,735.3 792.3,727.7M901.5,854.5 Q909.7,841.4 909.5,830.8M1213.0,855.1 Q1206.7,841.2 1191.4,829.8M1186.2,747.3 Q1176.2,733.2 1178.2,721.7M984.4,782.0 Q985.4,766.4 993.3,753.7M1477.1,857.7 Q1482.3,834.8 1485.5,816.0M1149.5,854.8 Q1153.6,841.1 1153.6,829.9M1138.8,764.7 Q1131.1,755.7 1120.7,748.4M1181.6,847.9 Q1185.9,828.4 1173.1,812.5M956.8,840.3 Q962.9,831.4 968.0,824.2M1458.3,872.0 Q1466.6,853.0 1473.2,837.4M1204.1,751.5 Q1205.1,735.3 1221.5,722.0M1471.4,810.2 Q1463.1,796.0 1449.5,784.4M885.9,829.3 Q893.2,806.7 904.0,788.3M1039.2,734.1 Q1043.3,715.0 1041.5,699.4M1029.9,870.2 Q1023.6,859.0 1021.3,849.8M1212.3,872.0 Q1218.3,861.6 1218.1,853.0M920.1,726.0 Q930.5,708.9 934.6,695.0M1290.1,787.9 Q1297.0,773.2 1291.4,761.2M977.2,764.1 Q978.4,746.4 997.7,732.0M777.4,735.2 Q773.7,718.2 782.0,704.4M894.9,819.0 Q901.0,800.7 903.2,785.7M800.1,799.8 Q803.3,778.4 820.2,760.8M1380.0,827.9 Q1379.6,804.9 1368.1,786.1M1372.9,798.4 Q1363.4,789.1 1359.4,781.4M823.2,741.6 Q822.1,723.7 805.8,709.1M1296.1,857.9 Q1305.7,836.9 1305.5,819.8M1458.3,824.4 Q1446.7,800.8 1440.9,781.4M802.4,751.1 Q804.7,737.2 800.6,725.9M1301.1,729.7 Q1299.6,715.3 1303.0,703.6M841.4,819.5 Q843.8,805.6 849.5,794.3M1462.6,880.4 Q1469.6,871.5 1474.0,864.2M972.5,735.4 Q974.4,719.8 966.1,707.1M1430.0,781.9 Q1433.2,769.4 1430.0,759.1M1334.9,815.7 Q1338.3,803.2 1327.7,792.9M1136.6,723.8 Q1135.8,709.2 1125.1,697.2M808.9,762.4 Q816.4,753.1 807.9,745.6M1152.9,782.6 Q1145.2,759.5 1134.9,740.6M1350.9,715.9 Q1341.4,695.6 1344.8,678.9M939.4,795.2 Q932.4,781.2 940.1,769.7M915.7,885.5 Q908.7,870.5 914.4,858.2M960.2,882.1 Q953.1,863.0 960.5,847.5M1043.6,851.2 Q1051.3,836.4 1047.8,824.2M1229.2,826.3 Q1227.2,818.0 1208.2,811.2M1058.7,868.0 Q1062.3,846.7 1077.0,829.2M1489.3,847.3 Q1489.2,824.9 1473.8,806.6M1065.3,885.1 Q1060.3,861.0 1052.8,841.3M954.1,797.2 Q950.3,784.8 961.4,774.6M879.4,795.1 Q884.2,786.2 874.2,778.9M1405.7,749.4 Q1417.4,741.4 1420.2,734.8M1195.2,738.9 Q1207.7,727.3 1213.7,717.8M777.9,747.3 Q778.8,732.6 767.6,720.5M1029.1,850.7 Q1037.0,840.4 1029.9,832.1M1271.0,730.8 Q1270.9,721.2 1277.3,713.4M1026.0,798.6 Q1028.0,781.3 1046.5,767.1M1173.0,761.0 Q1170.2,744.3 1183.2,730.7M1108.6,838.5 Q1110.9,830.7 1120.6,824.3M1125.6,821.8 Q1119.7,801.1 1106.0,784.1M783.1,782.5 Q773.6,769.1 762.1,758.1M1085.8,829.6 Q1084.5,806.6 1080.1,787.9M1279.2,879.0 Q1282.5,855.7 1300.7,836.5M877.5,878.1 Q880.6,869.1 875.2,861.8M1143.6,783.0 Q1141.8,760.1 1134.8,741.3M1364.8,739.2 Q1365.8,725.7 1364.6,714.6M907.4,794.4 Q899.4,785.8 889.3,778.6M860.7,884.3 Q862.3,872.3 850.8,862.4M1299.8,760.9 Q1299.6,739.5 1305.3,722.0M1217.2,758.0 Q1221.2,746.0 1233.7,736.1M1414.5,746.0 Q1412.4,736.0 1394.8,727.8M1167.5,716.7 Q1171.7,708.3 1181.8,701.4M1395.4,722.0 Q1393.9,704.5 1378.6,690.3M1204.3,822.1 Q1204.0,810.8 1224.1,801.5M802.1,834.7 Q795.7,825.5 783.0,817.9M1231.9,871.1 Q1228.5,851.5 1213.0,835.5M1375.1,736.1 Q1368.7,715.9 1364.4,699.5M756.1,847.7 Q760.9,831.5 773.8,818.2M869.2,752.9 Q870.4,740.8 888.9,731.0M819.8,776.7 Q820.8,767.7 816.5,760.4M1233.2,745.6 Q1236.1,735.6 1232.8,727.4M1083.7,815.3 Q1075.3,792.6 1068.0,774.0M1117.9,808.8 Q1121.2,786.3 1120.3,767.8M1063.4,852.2 Q1054.4,830.8 1054.3,813.2M945.5,777.6 Q944.5,755.2 935.2,736.9M1225.9,882.3 Q1226.8,872.7 1237.7,864.8M830.7,825.6 Q824.6,804.0 834.3,786.3M1469.5,782.2 Q1468.6,764.0 1479.4,749.1M1055.1,772.6 Q1052.9,763.3 1036.0,755.8M1056.7,867.2 Q1049.0,858.5 1048.0,851.3M1448.4,853.3 Q1442.2,830.9 1448.7,812.5M1060.9,754.6 Q1058.4,746.4 1063.7,739.8M834.3,804.5 Q839.6,781.4 853.9,762.5M830.5,849.5 Q824.4,839.9 832.2,832.1M1480.6,810.0 Q1478.4,795.1 1470.6,782.9M1470.1,789.9 Q1477.0,778.7 1470.8,769.6M1035.6,825.9 Q1038.3,803.1 1027.9,784.4M1143.8,739.4 Q1149.1,730.8 1163.1,723.8M1080.7,875.6 Q1077.3,858.4 1080.7,844.4M1302.0,759.8 Q1307.0,744.4 1313.3,731.7M853.6,750.5 Q850.3,731.3 863.7,715.6M1488.2,738.3 Q1481.9,727.9 1470.1,719.3M1210.4,865.0 Q1206.7,854.6 1219.2,846.1M1181.6,759.1 Q1179.2,745.5 1161.9,734.4M844.9,848.7 Q848.3,835.5 848.9,824.6M1114.2,867.9 Q1108.7,845.0 1104.6,826.3M1399.6,738.2 Q1406.0,723.6 1395.8,711.6M849.3,829.6 Q844.3,809.4 859.3,792.9M1448.6,769.7 Q1449.4,747.9 1455.7,730.1M1370.7,833.3 Q1373.8,820.0 1380.9,809.1M1278.0,822.5 Q1273.4,801.7 1263.0,784.6M755.9,853.4 Q753.0,833.0 770.7,816.2M1148.4,798.8 Q1152.1,789.1 1135.3,781.2M1381.7,756.7 Q1381.8,735.3 1388.3,717.8M1228.9,755.1 Q1224.9,742.9 1207.3,732.9M1182.3,845.1 Q1178.4,829.1 1179.5,816.0M1295.5,780.2 Q1298.0,762.7 1306.8,748.3M1259.3,725.8 Q1258.2,713.8 1274.3,704.0M796.8,717.5 Q790.9,697.2 779.5,680.6M1077.2,855.5 Q1069.9,839.9 1078.2,827.2M1339.5,849.3 Q1345.8,831.3 1354.3,816.6M1281.3,863.9 Q1281.1,846.0 1260.2,831.4M1482.3,750.2 Q1473.8,741.4 1475.3,734.2M1026.5,730.6 Q1018.8,719.3 1004.6,710.0M975.5,842.5 Q978.4,828.4 960.8,816.9M1412.4,835.6 Q1410.4,824.3 1408.2,815.1M1055.4,719.6 Q1062.0,704.4 1067.2,691.9M1387.3,834.5 Q1398.9,814.2 1403.6,797.6M1337.9,787.8 Q1346.1,769.2 1344.8,754.0M1279.5,792.6 Q1273.2,781.7 1271.9,772.9M1256.2,849.6 Q1262.1,838.8 1257.7,829.9M1023.7,731.6 Q1016.2,713.9 1017.7,699.4M966.7,716.2 Q959.4,706.0 963.4,697.7M759.4,811.2 Q761.0,787.7 774.1,768.5M1434.5,729.0 Q1420.9,718.8 1412.8,710.5M1197.3,847.5 Q1200.6,831.9 1210.7,819.1M1430.3,821.4 Q1424.7,804.8 1415.8,791.3M1078.6,859.0 Q1081.0,847.5 1069.6,838.1M807.1,809.0 Q810.8,797.6 814.4,788.4M824.3,842.8 Q827.7,828.4 816.4,816.6M1327.4,769.2 Q1322.7,750.3 1310.8,734.8M815.6,827.1 Q810.1,804.3 821.6,785.7M1132.2,797.2 Q1124.0,782.2 1116.8,769.9M1085.4,727.4 Q1078.7,708.6 1074.1,693.2M821.8,768.0 Q812.5,744.9 812.6,726.0M1009.2,880.4 Q1002.4,871.2 1002.2,863.7M1256.1,795.8 Q1258.2,786.5 1272.1,778.8M1259.3,794.2 Q1249.1,772.2 1239.8,754.1M964.9,761.3 Q962.5,740.0 965.0,722.6M1127.5,863.0 Q1129.4,845.9 1125.4,831.9M1207.1,786.0 Q1201.3,771.2 1190.9,759.2M1401.0,768.6 Q1403.8,754.8 1405.6,743.6M883.9,793.0 Q871.6,773.2 863.7,757.0M1310.2,873.4 Q1306.7,864.6 1291.8,857.4M964.1,829.9 Q958.1,821.6 962.2,814.9M999.2,836.4 Q1009.3,820.3 1014.7,807.1M1210.3,863.3 Q1207.0,852.7 1209.1,844.0M1214.4,734.5 Q1217.2,712.2 1208.7,693.9M1448.0,879.5 Q1460.6,865.4 1463.7,853.8M850.7,845.8 Q846.6,826.1 848.8,810.0M882.4,787.0 Q877.2,764.0 878.1,745.1M1210.3,791.5 Q1206.3,773.7 1208.3,759.1M781.1,858.2 Q777.7,839.6 769.8,824.4M1182.0,803.1 Q1182.6,780.6 1194.2,762.1M1004.0,822.1 Q1002.4,811.7 1023.1,803.2M1122.1,762.8 Q1111.7,746.5 1102.2,733.1M1481.9,852.9 Q1473.9,841.6 1480.0,832.3M844.7,748.6 Q838.2,724.6 836.4,705.0M803.0,734.2 Q812.9,710.1 813.6,690.4M1369.2,852.0 Q1361.2,840.1 1354.7,830.3M803.1,745.7 Q795.1,726.1 802.7,710.1M979.0,863.7 Q985.7,841.9 989.1,824.1M1425.1,812.5 Q1422.6,798.5 1428.4,787.0M781.8,760.5 Q770.1,745.2 765.1,732.8M936.8,779.4 Q942.0,755.9 936.2,736.7M1302.1,818.7 Q1297.8,805.7 1297.4,795.0M1221.2,864.6 Q1212.9,843.9 1212.2,826.9M761.6,817.3 Q751.9,805.8 739.8,796.4M922.9,750.9 Q920.5,732.3 926.6,717.0M1292.0,751.1 Q1288.5,728.2 1275.2,709.5M1273.1,843.2 Q1280.1,827.4 1289.4,814.6M1262.8,728.8 Q1263.0,718.1 1261.2,709.2M825.0,844.8 Q825.0,831.4 823.9,820.4M1371.5,767.9 Q1375.4,750.9 1376.2,737.1M984.5,763.8 Q988.1,748.4 988.9,735.7M853.3,793.1 Q842.9,776.1 839.9,762.3M1437.8,718.6 Q1427.6,702.7 1428.7,689.7M953.4,743.3 Q952.1,728.9 971.4,717.2M1013.5,836.6 Q1002.8,818.6 992.4,803.9M961.6,871.6 Q958.1,856.6 950.9,844.4M1111.6,741.2 Q1114.1,722.4 1121.3,707.1M1150.0,849.8 Q1144.2,826.4 1155.0,807.2M1126.3,830.9 Q1126.6,817.7 1134.4,807.0M1208.1,822.5 Q1217.0,803.7 1226.8,788.4M1276.4,838.2 Q1279.8,826.7 1281.4,817.3M799.8,847.0 Q800.1,835.6 799.5,826.2M1285.8,848.9 Q1290.7,833.5 1305.2,820.9M1171.3,888.5 Q1181.5,875.5 1180.8,864.8M817.1,851.0 Q822.2,832.6 818.8,817.5M1387.1,740.7 Q1391.8,724.9 1392.2,712.1M1459.5,855.5 Q1452.5,834.1 1440.3,816.7M1426.3,880.6 Q1428.5,860.4 1419.0,843.9M1145.8,831.8 Q1154.0,813.6 1161.9,798.7M1468.3,801.4 Q1471.4,785.5 1475.2,772.6M791.1,882.9 Q783.8,869.9 791.1,859.3M894.9,877.5 Q897.2,865.3 886.0,855.2M932.4,831.8 Q937.3,814.7 949.8,800.8M996.6,760.3 Q983.9,746.6 974.6,735.4M864.4,770.1 Q867.9,749.7 883.8,733.0M938.6,766.3 Q932.2,748.2 937.7,733.5M1140.0,762.1 Q1137.4,752.0 1152.5,743.7M1077.9,849.0 Q1079.9,832.4 1094.3,818.8M1450.5,722.6 Q1441.6,700.2 1447.2,681.8M945.7,888.0 Q953.8,868.5 956.1,852.5M759.7,768.7 Q771.6,753.3 777.7,740.7M864.8,887.8 Q855.6,870.9 856.3,857.2M1068.6,806.1 Q1073.3,790.9 1060.3,778.5M1104.4,768.8 Q1099.7,748.3 1093.1,731.5M831.5,756.7 Q833.5,732.5 836.8,712.7M1249.9,832.6 Q1242.5,816.3 1244.0,803.0M776.6,736.2 Q773.0,721.8 755.1,710.0M1002.9,755.9 Q998.1,743.0 1002.6,732.5M1381.5,799.5 Q1382.3,790.7 1363.2,783.5M1179.9,766.0 Q1180.2,746.5 1160.0,730.6M1443.3,831.3 Q1447.7,822.7 1440.1,815.7M1191.2,751.6 Q1185.8,740.0 1172.0,730.5M888.3,793.0 Q893.5,770.5 906.0,752.1M1331.2,738.5 Q1335.8,715.1 1347.3,696.0M1406.2,767.0 Q1410.7,743.1 1398.4,723.6M1370.3,878.5 Q1361.1,858.8 1351.5,842.7M1236.9,874.0 Q1228.4,855.1 1216.6,839.6M1008.6,745.0 Q1006.8,733.5 1009.3,724.2M951.3,787.1 Q956.6,763.8 955.5,744.7M1440.5,720.4 Q1430.3,698.2 1422.7,680.0M1298.5,846.8 Q1301.7,828.9 1297.4,814.3M1069.6,749.0 Q1057.0,737.7 1052.5,728.4M1454.7,881.3 Q1450.0,867.8 1450.8,856.8M1329.3,801.2 Q1341.2,790.7 1346.2,782.1M789.2,795.4 Q788.7,784.0 795.3,774.7M973.9,767.9 Q973.8,750.2 974.1,735.7M1255.2,797.8 Q1259.1,774.5 1252.5,755.4M1438.9,823.8 Q1446.2,806.4 1451.7,792.1M897.2,787.9 Q893.9,777.6 876.1,769.2M996.7,759.6 Q993.1,751.5 975.6,744.8M1018.0,791.3 Q1026.6,772.5 1036.0,757.0M916.2,888.1 Q919.5,877.4 919.7,868.6M966.3,870.6 Q963.2,852.8 975.5,838.3M1366.7,765.3 Q1367.0,747.4 1377.1,732.7M949.9,772.8 Q951.6,749.0 956.9,729.5M1168.0,829.8 Q1156.2,817.7 1149.4,807.9M1182.8,819.8 Q1190.1,795.9 1188.2,776.4M1480.3,801.9 Q1477.9,787.2 1479.1,775.2M1313.7,815.7 Q1320.1,805.9 1333.7,798.0M1305.3,810.8 Q1300.1,793.4 1308.7,779.1M851.2,842.9 Q851.3,829.4 834.8,818.4M1304.7,848.7 Q1304.0,834.6 1288.5,823.1M913.5,831.9 Q902.5,812.7 903.5,797.0M1188.9,853.3 Q1191.0,835.9 1210.2,821.7M1292.3,791.2 Q1285.4,773.9 1283.6,759.8M1158.1,821.3 Q1159.4,798.6 1162.7,780.0M1233.4,824.9 Q1233.3,810.5 1223.2,798.7M1039.3,721.5 Q1040.5,711.0 1033.1,702.4M1237.3,800.8 Q1232.6,779.6 1229.6,762.3M1307.1,833.9 Q1304.7,819.1 1324.3,807.1M1149.2,865.2 Q1150.1,843.0 1135.7,824.8M1146.8,878.7 Q1151.3,865.5 1154.1,854.8M1483.0,774.4 Q1481.0,760.2 1466.5,748.7M806.7,863.6 Q809.8,853.5 793.1,845.2M1121.4,847.1 Q1115.9,833.7 1110.0,822.7M1477.3,748.6 Q1485.3,726.0 1494.2,707.4M950.3,842.8 Q947.1,820.2 954.4,801.7M1203.2,882.4 Q1193.8,864.9 1187.8,850.7M1218.2,723.4 Q1212.7,715.7 1212.7,709.3M1117.8,727.9 Q1117.2,710.9 1125.5,697.1M1182.5,807.2 Q1185.8,786.5 1185.9,769.6M1169.4,859.0 Q1170.1,849.7 1152.4,842.1M1368.1,716.4 Q1375.2,693.9 1372.9,675.6M1270.4,780.8 Q1277.2,771.3 1282.0,763.4M1100.6,762.4 Q1105.8,748.7 1119.8,737.5M909.4,887.6 Q900.2,863.8 895.1,844.3M1291.4,782.7 Q1290.2,767.2 1299.5,754.5M1191.9,750.7 Q1191.3,739.4 1193.9,730.1M1412.5,740.1 Q1406.8,717.2 1402.0,698.6M833.2,770.3 Q836.7,746.4 827.1,726.9M1472.7,836.7 Q1466.4,826.0 1469.7,817.2M938.5,773.6 Q941.2,763.2 946.4,754.6M968.8,759.6 Q962.7,749.5 951.9,741.3M810.1,806.5 Q809.9,794.5 822.1,784.8M1384.2,880.4 Q1387.5,857.4 1372.2,838.5M1101.8,869.8 Q1098.5,854.5 1103.6,841.9M1311.7,779.4 Q1313.3,757.1 1320.9,738.9M777.9,762.0 Q777.5,747.4 772.2,735.5M758.8,796.8 Q767.8,774.4 778.8,756.0M1259.6,820.5 Q1262.8,796.3 1272.4,776.5M1119.2,879.4 Q1117.5,862.6 1123.6,848.9M1243.2,800.5 Q1257.7,777.2 1265.2,758.2M1453.8,722.6 Q1456.9,713.7 1446.7,706.4M1165.3,759.9 Q1156.1,750.6 1154.3,742.9M860.5,845.4 Q858.1,834.5 845.9,825.6M850.9,860.8 Q859.5,842.4 867.6,827.3M1292.0,761.8 Q1288.7,747.1 1286.7,735.1M1425.5,791.3 Q1420.6,770.4 1431.3,753.3M909.7,816.1 Q902.2,795.4 898.0,778.4M1032.1,795.3 Q1039.5,780.7 1050.8,768.7M959.5,775.2 Q953.3,759.1 944.5,746.0M802.7,829.9 Q809.5,807.9 820.3,789.9M1037.7,813.0 Q1034.1,796.1 1023.5,782.3M1120.5,749.5 Q1127.2,734.5 1135.2,722.2M996.8,756.7 Q994.3,738.6 999.2,723.8M1101.3,786.2 Q1104.2,768.1 1117.9,753.4M1150.5,813.3 Q1143.0,794.6 1139.2,779.3M1433.0,740.4 Q1429.7,721.5 1422.4,706.0M1086.8,756.8 Q1085.4,746.2 1106.9,737.6M859.8,844.3 Q860.2,830.5 846.4,819.2M1476.5,751.3 Q1483.0,732.0 1471.9,716.1M1193.6,871.6 Q1187.8,853.0 1177.4,837.7M1273.4,741.8 Q1286.7,732.6 1295.0,725.1M1233.3,726.1 Q1244.3,706.8 1254.8,691.1M1280.8,792.0 Q1286.4,773.8 1299.5,759.0M809.8,740.4 Q819.5,717.0 819.0,697.8M863.7,733.4 Q862.2,714.5 860.6,698.9M926.0,848.6 Q927.9,828.0 936.0,811.1M1115.8,784.2 Q1113.0,768.8 1108.1,756.3M1462.3,855.3 Q1469.7,845.3 1469.8,837.2M1008.4,870.6 Q1004.8,847.4 989.5,828.4M1034.8,796.6 Q1041.6,779.9 1050.6,766.2M1407.9,758.5 Q1401.4,737.7 1403.2,720.6M1345.3,816.0 Q1350.3,804.6 1362.6,795.3M1250.4,887.4 Q1251.7,874.4 1252.3,863.6M964.7,808.5 Q963.6,784.8 973.4,765.5M1257.3,822.7 Q1257.6,808.9 1264.9,797.6M1329.2,782.9 Q1321.3,761.6 1320.3,744.2M997.1,737.0 Q1002.3,714.9 1018.9,696.7M931.5,869.3 Q925.0,847.6 920.3,829.8M1120.6,738.1 Q1113.2,726.9 1116.1,717.8M861.2,820.8 Q874.0,808.2 879.4,797.8M1247.5,763.1 Q1251.3,742.9 1240.4,726.3M1066.4,836.1 Q1073.1,816.0 1075.3,799.5M1006.6,741.6 Q1005.2,727.8 1026.8,716.5M962.4,769.2 Q962.0,754.2 978.7,741.9M831.6,718.1 Q833.8,704.8 841.6,693.9M1229.8,804.7 Q1221.3,791.1 1225.7,779.9M1454.7,843.2 Q1455.3,833.9 1441.6,826.3M1128.1,846.0 Q1128.6,825.9 1112.5,809.5M902.9,739.2 Q903.9,719.2 916.7,702.8M1038.3,843.5 Q1045.4,830.9 1035.8,820.7M850.3,880.1 Q852.8,857.8 872.2,839.5M900.7,791.6 Q907.4,781.0 919.4,772.4M1373.8,801.0 Q1373.8,785.1 1393.9,772.0M920.8,864.9 Q932.5,847.5 933.2,833.2M1322.4,821.8 Q1318.3,801.7 1323.8,785.2M994.0,876.8 Q990.1,860.4 973.4,847.0M1485.3,824.6 Q1486.8,808.7 1483.4,795.8M1206.9,800.5 Q1216.6,777.9 1224.0,759.4M1288.2,840.8 Q1284.3,829.8 1287.8,820.9M905.5,881.3 Q915.0,869.7 919.4,860.3M1052.5,719.3 Q1057.7,708.7 1058.9,700.0M1015.8,819.9 Q1022.4,809.5 1022.8,801.0M1330.2,813.5 Q1319.9,796.3 1308.3,782.3M1053.8,727.7 Q1062.7,718.8 1073.9,711.5M1168.4,835.7 Q1169.0,813.6 1174.3,795.6M1043.4,884.8 Q1043.9,861.4 1028.1,842.2M1227.4,775.1 Q1228.3,756.0 1217.5,740.3M1165.8,817.4 Q1178.5,808.7 1183.6,801.7M1314.4,766.3 Q1310.1,746.7 1297.5,730.7M1008.8,797.5 Q1002.1,785.0 990.0,774.8M929.6,745.7 Q917.0,732.5 913.0,721.7M1470.7,724.7 Q1463.6,702.2 1467.2,683.9M1070.3,803.8 Q1063.0,795.1 1072.2,788.1M974.5,839.4 Q968.8,817.8 960.3,800.1M1451.3,770.1 Q1453.9,760.5 1440.2,752.6M1008.4,831.5 Q1005.1,808.3 1013.7,789.3M1108.4,772.0 Q1117.5,756.4 1113.5,743.6M1261.2,804.0 Q1256.4,782.9 1261.5,765.7M1247.6,762.3 Q1245.9,751.1 1242.7,742.0M778.7,778.1 Q776.7,754.6 779.1,735.3M1090.8,837.2 Q1090.8,821.2 1086.6,808.1M957.5,834.5 Q957.7,819.8 966.5,807.8M1224.3,749.3 Q1216.4,733.6 1223.9,720.8M847.9,795.6 Q857.5,775.2 861.6,758.6M1347.5,884.2 Q1337.1,873.2 1332.1,864.3M1337.6,748.2 Q1339.3,735.3 1321.6,724.7M908.9,756.2 Q904.2,738.7 917.9,724.4M1181.2,807.7 Q1186.2,790.9 1181.9,777.1M1359.6,865.7 Q1353.0,852.5 1339.4,841.7M774.5,826.4 Q783.1,810.8 785.4,798.0M1293.4,836.4 Q1298.6,823.2 1303.4,812.4M916.0,867.1 Q911.6,851.6 917.4,838.9M1365.9,797.9 Q1370.7,778.0 1381.0,761.6M1185.1,796.1 Q1195.8,784.5 1198.3,775.0M780.5,720.8 Q774.0,705.3 762.1,692.7M1006.3,757.2 Q1014.1,736.7 1009.8,719.9M897.9,781.6 Q900.3,763.7 909.9,749.1M891.7,782.5 Q900.3,765.4 912.3,751.4M1375.7,860.9 Q1381.1,846.1 1376.0,834.1M1286.6,784.9 Q1286.3,774.1 1296.8,765.3M949.6,758.9 Q958.6,739.9 956.1,724.3M1188.3,799.6 Q1184.9,777.3 1172.4,759.1M1480.7,773.3 Q1468.0,763.1 1463.7,754.7M1293.3,787.2 Q1290.1,765.9 1308.0,748.6M980.3,761.2 Q970.2,749.1 959.6,739.3M1004.8,794.2 Q1004.9,777.7 1026.1,764.3M853.6,873.1 Q851.0,860.6 855.3,850.4M1413.1,878.5 Q1405.7,861.4 1395.2,847.4M1272.4,814.1 Q1264.1,801.7 1267.9,791.6M1051.6,859.3 Q1045.9,845.2 1050.1,833.7M1278.8,788.0 Q1279.2,773.9 1290.8,762.4M812.0,827.4 Q803.6,807.5 792.4,791.2M1406.2,804.1 Q1397.9,789.6 1389.9,777.8M1186.5,875.1 Q1191.2,856.5 1207.1,841.3M805.7,774.7 Q793.2,760.9 786.2,749.7M1424.6,871.7 Q1426.8,861.8 1406.2,853.7M877.6,767.8 Q866.2,756.4 864.7,747.0M1094.5,850.7 Q1088.5,841.9 1094.1,834.6M1334.0,873.3 Q1328.7,851.1 1335.5,833.0M1282.2,727.2 Q1285.8,706.7 1273.4,690.0M964.4,844.5 Q960.8,828.7 952.9,815.7M1071.5,742.3 Q1075.1,725.5 1072.9,711.9M1004.6,822.6 Q1000.7,811.6 1005.6,802.6M1332.5,748.4 Q1323.6,735.9 1313.6,725.7M1152.8,754.9 Q1155.0,745.2 1170.1,737.3M913.7,784.8 Q923.4,763.3 924.6,745.6M1156.1,773.6 Q1153.2,757.6 1136.6,744.5M1371.6,875.2 Q1378.4,853.8 1378.0,836.3M969.2,813.4 Q975.2,803.0 988.4,794.5M884.6,887.2 Q886.3,869.3 871.9,854.6M1215.3,823.9 Q1209.3,801.7 1207.2,783.6M1174.1,750.6 Q1169.0,731.3 1173.1,715.6M846.6,743.4 Q856.8,726.2 864.8,712.1M1378.6,814.2 Q1374.2,793.3 1371.1,776.1M1419.1,760.2 Q1412.9,742.3 1422.1,727.5M1171.2,854.5 Q1176.5,832.1 1167.6,813.8M782.9,873.7 Q786.2,854.7 796.6,839.2M1186.8,859.5 Q1186.6,848.1 1172.8,838.8M1398.9,754.8 Q1396.0,738.1 1399.2,724.4M1374.7,764.5 Q1367.8,743.9 1370.8,727.1M1462.1,740.8 Q1453.5,731.4 1441.4,723.8M774.6,742.1 Q774.8,718.9 763.8,699.9M911.8,717.3 Q914.1,709.5 895.2,703.1M1090.7,758.7 Q1089.7,750.2 1097.0,743.3M887.5,791.5 Q886.4,772.1 880.5,756.2M893.5,812.9 Q905.9,804.5 912.1,797.6M1178.2,797.9 Q1182.8,783.7 1189.2,772.0M1276.6,792.5 Q1274.4,778.2 1286.4,766.5M1006.4,757.1 Q1008.2,746.0 1022.4,736.9M1296.5,723.5 Q1300.0,700.5 1295.2,681.8M833.0,820.6 Q823.7,799.5 823.7,782.3M1036.5,849.6 Q1027.9,829.3 1017.3,812.8M1427.9,765.5 Q1437.9,756.4 1444.1,748.9M1082.5,836.9 Q1082.0,816.8 1097.4,800.4M1291.6,876.6 Q1290.2,855.9 1292.6,839.0M1475.0,888.8 Q1481.4,867.8 1475.3,850.7M1397.7,803.3 Q1393.3,793.4 1402.7,785.3M1001.1,814.5 Q1008.1,798.5 1007.4,785.4M1452.1,769.3 Q1447.3,745.9 1444.3,726.7M1310.8,885.8 Q1319.9,869.7 1323.8,856.6M986.5,823.0 Q974.2,799.8 965.4,780.9M1396.3,814.1 Q1399.3,799.4 1409.2,787.5M857.1,776.3 Q858.9,756.0 863.4,739.4M763.2,889.4 Q764.9,880.4 753.5,873.0M1444.2,835.4 Q1450.2,821.4 1455.1,809.9M1180.1,852.5 Q1176.7,835.6 1181.7,821.9M1326.5,733.7 Q1320.9,724.5 1332.2,716.9M1398.0,748.7 Q1394.5,733.3 1387.4,720.7M1207.9,749.4 Q1208.6,732.8 1228.8,719.1M915.6,749.2 Q916.5,739.7 894.1,732.0M1462.9,721.8 Q1459.3,700.4 1466.4,682.9M1403.7,735.3 Q1409.1,717.1 1411.3,702.1M929.1,741.1 Q928.0,723.0 920.0,708.2M1298.5,720.7 Q1303.3,701.0 1319.6,684.9M1177.5,772.7 Q1167.4,750.5 1165.3,732.3M1124.5,792.7 Q1127.5,775.6 1111.5,761.6M1147.9,783.1 Q1148.5,763.0 1127.6,746.6M1368.3,759.9 Q1366.9,744.8 1348.0,732.3M1470.5,819.3 Q1476.0,795.5 1469.2,776.0M1375.1,877.0 Q1367.8,861.7 1375.5,849.2M1454.2,730.4 Q1450.3,713.1 1458.7,699.0M1012.5,767.5 Q1009.3,759.6 1008.1,753.2M1282.9,837.4 Q1283.9,814.1 1299.2,795.0M1204.1,836.2 Q1196.6,815.5 1188.2,798.6M1206.4,770.1 Q1208.6,747.3 1202.6,728.7M805.3,872.1 Q808.9,848.4 825.7,829.0M1367.5,887.1 Q1364.5,877.6 1348.8,869.8M1481.4,720.4 Q1483.2,698.8 1488.5,681.2M859.9,803.7 Q862.3,787.8 846.7,774.8M1298.8,744.0 Q1307.1,726.1 1303.1,711.4M1476.3,870.7 Q1469.7,862.1 1472.8,855.1M1306.9,729.4 Q1310.7,708.1 1312.0,690.6M1449.5,867.1 Q1451.9,847.3 1455.1,831.1M1135.7,720.1 Q1136.8,709.1 1144.0,700.2M1086.5,863.0 Q1094.3,849.0 1096.5,837.4M1366.5,756.1 Q1367.4,738.3 1365.0,723.8M818.4,748.2 Q826.7,736.5 830.9,726.9M1036.5,821.0 Q1033.2,806.0 1038.1,793.8M1007.7,882.6 Q996.6,860.3 991.1,842.1M1390.7,792.6 Q1393.7,774.3 1395.2,759.4M1420.9,741.9 Q1411.0,720.0 1410.4,702.1M973.2,805.1 Q981.8,784.2 976.8,767.0M894.0,781.4 Q898.4,764.2 898.0,750.1M1127.1,732.6 Q1124.1,712.0 1140.0,695.2M1352.6,716.0 Q1351.0,697.0 1358.0,681.5M820.8,760.1 Q826.3,742.1 822.3,727.3M881.3,823.6 Q870.2,810.9 861.2,800.5M836.4,742.9 Q840.5,734.6 857.4,727.8M1311.7,788.9 Q1315.6,772.7 1300.8,759.5M910.4,883.0 Q908.8,862.4 926.4,845.6M1480.2,829.3 Q1480.2,812.0 1483.2,797.9M1455.8,886.7 Q1451.5,863.3 1440.0,844.1M1269.8,747.1 Q1267.0,724.7 1280.9,706.4M973.1,834.1 Q976.1,811.9 995.0,793.7M1369.5,817.6 Q1359.8,803.9 1358.1,792.7M780.5,790.3 Q773.7,780.6 767.4,772.7M854.9,750.3 Q859.9,738.4 875.8,728.6M1208.8,809.6 Q1219.9,786.1 1223.2,766.9M1395.7,844.2 Q1395.2,822.0 1388.3,803.9M998.3,877.0 Q1000.6,864.8 1020.3,854.9M1004.8,844.9 Q995.0,827.8 992.2,813.8M1398.8,751.3 Q1403.0,735.2 1413.6,722.0M1105.5,743.7 Q1109.5,720.5 1110.0,701.6M1044.2,839.5 Q1037.6,825.6 1030.0,814.2M1314.9,866.2 Q1323.9,850.0 1321.9,836.7M1232.8,885.8 Q1241.7,873.9 1249.2,864.2M1174.3,818.7 Q1160.5,808.2 1153.1,799.7M1409.9,784.7 Q1415.2,767.0 1407.3,752.6M1296.8,780.5 Q1300.1,762.2 1284.2,747.3M872.6,874.5 Q875.7,858.0 857.1,844.5M901.2,833.7 Q901.0,821.7 885.1,811.9M1409.4,871.1 Q1405.8,852.3 1415.6,836.9M1488.6,772.4 Q1479.4,754.1 1467.7,739.2M1139.3,797.9 Q1130.0,783.4 1134.1,771.5M1229.9,777.1 Q1230.8,767.5 1224.1,759.7M1301.6,787.7 Q1304.9,778.1 1307.2,770.3M1110.4,884.7 Q1103.2,871.0 1111.4,859.7M852.7,749.0 Q842.1,738.2 838.4,729.4M1430.8,817.8 Q1428.1,802.0 1433.5,789.1M1391.8,843.8 Q1377.5,829.0 1370.8,817.0M781.0,842.0 Q780.6,833.8 778.7,827.1M1027.4,767.0 Q1037.5,743.8 1047.4,724.8M1149.9,881.6 Q1140.5,862.3 1138.0,846.5M862.1,733.2 Q858.9,719.0 866.9,707.5M814.9,774.0 Q826.1,758.7 831.6,746.2M1359.0,760.5 Q1357.5,739.3 1349.4,721.8M1147.9,755.8 Q1149.5,739.1 1137.5,725.5M927.8,851.8 Q920.3,841.0 906.2,832.1M1403.0,826.1 Q1400.4,814.3 1403.3,804.6M1241.9,765.4 Q1241.1,755.0 1263.9,746.4M854.9,770.9 Q855.6,757.7 857.3,746.9M869.0,860.2 Q859.5,840.8 855.0,824.9M837.3,804.5 Q836.0,786.3 846.9,771.4M1391.2,872.8 Q1380.9,857.3 1374.5,844.6M1283.9,726.6 Q1279.1,708.6 1293.4,693.9M863.1,757.1 Q872.5,742.2 878.5,730.0M1041.0,717.1 Q1033.6,700.5 1027.6,686.9M1439.9,765.4 Q1449.1,751.2 1447.5,739.5M800.0,818.2 Q788.6,799.6 783.5,784.4M1000.0,774.3 Q1008.8,755.1 1020.6,739.3M1070.9,889.5 Q1069.6,866.3 1068.2,847.4M1135.4,733.4 Q1137.8,715.1 1144.8,700.1M1184.6,874.0 Q1193.2,856.0 1192.9,841.3M1294.5,795.1 Q1293.7,771.6 1314.1,752.4M1490.0,744.2 Q1496.3,722.0 1496.2,703.8M1009.5,765.1 Q998.3,754.5 992.8,745.8M879.6,858.5 Q892.1,841.9 895.4,828.4M1078.2,745.9 Q1073.3,723.4 1061.2,705.0M1375.9,736.8 Q1371.5,724.7 1382.6,714.8M1391.0,845.8 Q1388.9,829.0 1403.2,815.2M1377.6,809.3 Q1381.1,795.2 1391.4,783.8M786.6,837.2 Q782.9,828.9 789.4,822.1M1057.3,788.4 Q1056.8,769.2 1063.4,753.4M923.4,851.2 Q928.1,842.4 927.1,835.2M1216.9,719.6 Q1223.4,710.5 1223.2,703.1M1220.6,887.3 Q1226.9,868.1 1217.3,852.3" fill="none" stroke="#D838E8" stroke-width="0.8" opacity="0.5"/><g filter="url(#dblur1)" fill="none" stroke-linecap="round"><path d="M1064,786 Q1061,830 1057,866" stroke="#CE10DC" stroke-width="6.5" opacity="0.75"/><path d="M1064,786 Q1061,830 1057,866" stroke="#DA40E8" stroke-width="2" opacity="0.6"/><path d="M888,799 Q890,815 892,842" stroke="#CA0CD8" stroke-width="6" opacity="0.6"/></g><g fill="none" stroke-linecap="round" stroke-linejoin="round" stroke="#E234F2"><path d="M1125,572 C1112,566 1096,552 1088.4,539.3" stroke-width="3.8"/><path d="M1088.4,539.3 C1081,523 1080,505 1082.5,487.3" stroke-width="3"/><path d="M1082.5,487.3 C1084,475 1086.5,466 1088.8,457.7" stroke-width="2"/><path d="M1093.5,546 C1099,538 1102,530 1102.6,525.1" stroke-width="2.6"/><path d="M1102.6,525.1 C1103.6,518 1103.6,512 1103.3,507.4" stroke-width="1.8"/><path d="M1214.8,545.2 C1218,538 1220,531 1220.8,525.1" stroke-width="3.4"/><path d="M1220.8,525.1 C1223,514 1224,505 1224.3,496.7" stroke-width="2.8"/><path d="M1224.3,496.7 L1224.3,479" stroke-width="2"/><path d="M1203,556 C1198,548 1195.4,540 1195.2,534.6" stroke-width="2.6"/><path d="M1195.2,534.6 C1195.2,527 1196.6,521 1198.3,516.8" stroke-width="1.8"/><path d="M1166,577 C1172,572 1176,570 1179.4,567.7 C1183,562 1186,556 1187.7,549.9" stroke-width="2"/></g><g fill="none" stroke="#8A0092" stroke-width="1.3" opacity="0.5" stroke-linecap="round"><path d="M1127,573.2 C1114,567.6 1098.5,553.4 1091,540.6 C1083.8,524.6 1082.8,506 1085,488.6"/><path d="M1217,546.4 C1220,539 1222,532 1223,526 C1225,515 1226,506 1226.3,497"/></g><g id="deer"><path d="M889.2,641.5C892.8,639.6 895.7,637.3 900.0,635.5C904.3,633.7 908.2,632.3 913.0,631.3C917.8,630.3 920.5,629.6 926.6,630.2C932.7,630.8 937.2,633.0 947.0,634.7C956.8,636.4 968.8,638.7 981.0,639.9C993.2,641.1 1002.8,641.6 1015.0,641.5C1027.2,641.4 1038.8,639.4 1049.0,639.3C1059.2,639.2 1065.1,640.0 1071.6,640.8C1078.1,641.6 1079.9,643.7 1085.2,643.8C1090.5,643.9 1096.0,642.0 1101.0,641.5C1106.0,641.0 1110.2,642.0 1113.2,641.0C1116.2,640.0 1116.2,638.5 1117.9,636.2C1119.6,633.9 1121.4,631.0 1122.5,628.0C1123.6,625.0 1123.5,622.6 1123.8,619.7C1124.1,616.8 1124.2,614.6 1124.4,612.0C1124.6,609.4 1125.1,607.5 1125.0,605.5C1124.9,603.5 1125.5,602.0 1123.8,600.8C1122.1,599.6 1118.4,600.0 1115.6,598.9C1112.8,597.8 1110.2,596.4 1108.5,594.8C1106.8,593.2 1106.1,592.9 1106.1,590.1C1106.1,587.3 1107.0,582.3 1108.5,579.5C1110.0,576.7 1112.3,575.3 1114.4,574.8C1116.5,574.3 1118.5,576.7 1120.0,576.5C1121.5,576.3 1121.1,574.8 1122.6,573.6C1124.1,572.4 1126.9,569.6 1128.6,570.0C1130.3,570.4 1131.7,573.8 1132.1,575.9C1132.5,578.0 1129.8,580.3 1130.9,581.8C1132.0,583.3 1134.6,583.1 1138.0,584.2C1141.4,585.3 1146.0,588.0 1149.8,587.8C1153.6,587.6 1157.2,584.1 1159.3,583.0C1161.4,581.9 1159.6,583.3 1161.7,581.8C1163.8,580.3 1167.3,577.1 1171.1,574.8C1174.9,572.5 1178.2,570.9 1182.9,568.8C1187.6,566.7 1192.4,565.7 1197.1,562.9C1201.8,560.1 1205.7,556.7 1208.9,553.5C1212.1,550.3 1213.2,546.3 1214.8,545.2C1216.4,544.1 1218.5,545.3 1217.9,547.6C1217.3,549.9 1214.6,554.6 1211.3,558.2C1208.0,561.8 1204.2,564.9 1199.5,567.7C1194.8,570.5 1189.5,571.9 1185.3,573.6C1181.1,575.3 1177.3,577.0 1176.0,577.4C1174.7,577.8 1176.1,576.0 1178.2,575.9C1180.3,575.8 1185.8,575.6 1187.7,577.1C1189.6,578.6 1189.0,581.8 1188.8,584.2C1188.6,586.6 1187.7,588.4 1186.6,590.5C1185.5,592.6 1185.3,593.9 1182.9,596.0C1180.5,598.1 1176.7,600.6 1173.5,601.9C1170.3,603.2 1166.9,601.6 1165.2,603.1C1163.5,604.6 1164.5,607.3 1164.0,610.2C1163.5,613.1 1163.0,616.0 1162.4,619.0C1161.8,622.0 1161.5,623.9 1160.5,626.8C1159.5,629.7 1157.5,630.3 1156.9,635.0C1156.3,639.7 1157.7,647.0 1156.9,652.8C1156.1,658.6 1153.9,662.1 1152.2,667.0C1150.5,671.9 1148.8,676.6 1147.5,680.0C1146.2,683.4 1148.5,681.4 1145.0,685.7C1141.5,690.0 1134.2,698.5 1128.3,703.8C1122.4,709.1 1117.7,711.7 1112.4,715.2C1107.1,718.7 1103.7,719.8 1098.8,723.1C1093.9,726.4 1088.9,729.0 1085.2,733.3C1081.5,737.6 1079.8,742.0 1078.4,746.9C1077.0,751.8 1076.5,757.2 1077.3,760.5C1078.1,763.8 1081.6,762.1 1082.9,765.0C1084.2,767.9 1085.9,772.9 1084.7,776.4C1083.5,779.9 1079.5,782.4 1076.1,784.3C1072.7,786.2 1069.0,788.6 1065.9,787.2C1062.8,785.8 1060.9,780.8 1059.1,776.4C1057.3,772.0 1057.3,765.9 1055.7,762.8C1054.1,759.7 1051.9,761.0 1050.1,759.4C1048.3,757.8 1046.5,756.6 1045.5,753.7C1044.5,750.8 1045.4,745.9 1044.4,743.5C1043.4,741.1 1043.2,741.1 1039.9,740.1C1036.6,739.1 1034.9,738.2 1026.3,737.8C1017.7,737.4 1004.1,738.1 992.3,737.8C980.5,737.5 968.8,736.0 960.6,736.0C952.4,736.0 950.5,738.1 947.0,737.8C943.5,737.5 943.5,734.8 941.3,734.4C939.0,734.0 936.8,734.0 934.5,735.6C932.2,737.2 931.4,741.1 928.8,743.5C926.2,745.9 923.1,746.1 919.8,749.2C916.5,752.3 913.4,755.6 910.7,760.5C908.0,765.4 907.0,770.7 905.0,776.4C903.0,782.1 902.9,787.9 899.4,792.2C895.9,796.5 889.9,799.7 885.8,800.1C881.7,800.5 879.8,798.0 876.7,794.5C873.6,791.0 870.6,785.8 868.8,780.9C867.0,776.0 865.9,771.6 866.5,767.3C867.1,763.0 868.3,761.4 872.2,757.1C876.1,752.8 884.6,747.8 888.1,743.5C891.6,739.2 891.3,737.2 891.5,733.3C891.7,729.4 890.8,726.5 889.2,722.0C887.6,717.5 885.0,713.7 882.4,708.4C879.8,703.1 877.1,698.2 874.5,692.5C871.9,686.8 869.1,677.5 867.7,676.7C866.3,675.9 866.9,683.5 866.5,688.0C866.1,692.5 865.0,696.5 865.4,701.6C865.8,706.7 869.0,712.8 868.8,716.3C868.6,719.8 865.9,721.8 864.3,720.8C862.7,719.8 861.1,715.3 859.7,710.6C858.3,705.9 856.7,700.5 856.3,694.8C855.9,689.1 856.7,683.8 857.5,678.9C858.3,674.0 859.7,670.0 860.9,667.6C862.1,665.2 863.1,665.9 864.3,665.3C865.5,664.7 866.3,666.6 867.7,664.2C869.1,661.8 870.0,655.0 872.2,651.7C874.4,648.4 876.9,647.8 880.0,646.0C883.1,644.2 885.6,643.4 889.2,641.5Z" fill="url(#dg1)"/><g clip-path="url(#deerclip)"><rect x="850" y="540" width="380" height="270" fill="url(#dg2)"/><rect x="850" y="540" width="380" height="270" filter="url(#fur)"/><g filter="url(#dblur)"><ellipse cx="940" cy="665" rx="10" ry="16" fill="#5A2206" opacity="0.55" transform="rotate(-20 940 665)"/><ellipse cx="1066" cy="700" rx="10" ry="30" fill="#5A2206" opacity="0.45"/><ellipse cx="1000" cy="731" rx="50" ry="7" fill="#3A1404" opacity="0.7"/><ellipse cx="1135" cy="690" rx="18" ry="22" fill="#2E1206" opacity="0.85" transform="rotate(35 1135 690)"/><ellipse cx="1105" cy="668" rx="14" ry="26" fill="#A8662C" opacity="0.8" transform="rotate(20 1105 668)"/><ellipse cx="880" cy="690" rx="10" ry="34" fill="#B8691E" opacity="0.7" transform="rotate(-12 880 690)"/><ellipse cx="900" cy="765" rx="12" ry="34" fill="#B8722A" opacity="0.8" transform="rotate(28 900 765)"/><ellipse cx="876" cy="778" rx="7" ry="22" fill="#7A4512" opacity="0.8" transform="rotate(10 876 778)"/><ellipse cx="1066" cy="760" rx="7" ry="26" fill="#C89A62" opacity="0.9"/><ellipse cx="1054" cy="745" rx="6" ry="12" fill="#A86424" opacity="0.9"/><ellipse cx="1143" cy="610" rx="22" ry="30" fill="#C8955A"/><ellipse cx="1146" cy="594" rx="14" ry="9" fill="#6E3A14" opacity="0.9"/><ellipse cx="1114" cy="587" rx="7" ry="10" fill="#8A5426" opacity="0.9" transform="rotate(-25 1114 587)"/><ellipse cx="1179" cy="588" rx="8" ry="11" fill="#A8763E" opacity="0.9" transform="rotate(30 1179 588)"/><ellipse cx="1190" cy="566" rx="30" ry="4" fill="#7A4A1C" transform="rotate(-32 1190 566)"/></g><g filter="url(#dblur1)"><path d="M891,733 Q883.5,765 886,797" fill="none" stroke="#4E2208" stroke-width="3" opacity="0.6"/><path d="M906,758 Q898,779 892.5,795" fill="none" stroke="#E2B474" stroke-width="2.2" opacity="0.55"/><path d="M874,760 Q871,775 878,790 M879,752 Q875,772 882,794" fill="none" stroke="#D8A868" stroke-width="1" opacity="0.5"/></g><ellipse cx="1143" cy="655" rx="16" ry="25" fill="url(#dg3)"/><ellipse cx="1142.7" cy="624" rx="9" ry="12" fill="#E2C79C" opacity="0.75" filter="url(#dblur1)"/><g filter="url(#dblur1)"><ellipse cx="1128.8" cy="605.6" rx="4.4" ry="3.4" fill="#6A3A18" opacity="0.8"/><ellipse cx="1158.6" cy="607.6" rx="4.4" ry="3.4" fill="#6A3A18" opacity="0.8"/><ellipse cx="1128.8" cy="605.6" rx="3.2" ry="2.6" fill="#1E0E06"/><ellipse cx="1158.6" cy="607.6" rx="3.2" ry="2.6" fill="#1E0E06"/><ellipse cx="1142.7" cy="629.4" rx="7.6" ry="6.2" fill="#5A3626"/><ellipse cx="1139.4" cy="630" rx="1.6" ry="1.8" fill="#1A0A04"/><ellipse cx="1146" cy="630" rx="1.6" ry="1.8" fill="#1A0A04"/><ellipse cx="1115.6" cy="588" rx="3.2" ry="6" fill="#D0A878" opacity="0.7" transform="rotate(-25 1115.6 588)"/><ellipse cx="1177.5" cy="589" rx="3.6" ry="7" fill="#E0C296" opacity="0.75" transform="rotate(32 1177.5 589)"/><ellipse cx="1128" cy="573.4" rx="3.4" ry="2.6" fill="#F0DEC0" transform="rotate(25 1128 573.4)"/></g><path d="M936,721.6 Q950,724.6 975,724 T1010,724" fill="none" stroke="#E6D2A6" stroke-width="1.7" opacity="0.9"/><path d="M875.6,680 Q879,693 886,704.5" fill="none" stroke="#E6D2A6" stroke-width="1.6" opacity="0.85"/><g fill="#EBDDB6" filter="url(#dblur0)"><ellipse cx="916.9" cy="633.3" rx="2.6" ry="1.8" transform="rotate(10 916.9 633.3)"/><ellipse cx="930.2" cy="633.0" rx="2.4" ry="1.8" transform="rotate(-23 930.2 633.0)"/><ellipse cx="1048.9" cy="639.8" rx="2.4" ry="1.8" transform="rotate(5 1048.9 639.8)"/><ellipse cx="897.9" cy="643.8" rx="2.4" ry="2.1" transform="rotate(-4 897.9 643.8)"/><ellipse cx="921.8" cy="644.5" rx="2.5" ry="2.2" transform="rotate(-18 921.8 644.5)"/><ellipse cx="959.1" cy="649.2" rx="2.8" ry="2.0" transform="rotate(-20 959.1 649.2)"/><ellipse cx="972.0" cy="643.7" rx="3.1" ry="1.6" transform="rotate(-3 972.0 643.7)"/><ellipse cx="987.0" cy="646.9" rx="2.3" ry="1.9" transform="rotate(1 987.0 646.9)"/><ellipse cx="999.3" cy="645.7" rx="3.0" ry="1.8" transform="rotate(-1 999.3 645.7)"/><ellipse cx="1012.0" cy="644.9" rx="3.0" ry="1.9" transform="rotate(-3 1012.0 644.9)"/><ellipse cx="1034.7" cy="642.7" rx="2.5" ry="2.0" transform="rotate(-5 1034.7 642.7)"/><ellipse cx="882.2" cy="655.9" rx="3.1" ry="1.8" transform="rotate(-19 882.2 655.9)"/><ellipse cx="895.4" cy="651.0" rx="2.8" ry="1.9" transform="rotate(-14 895.4 651.0)"/><ellipse cx="916.0" cy="651.9" rx="2.7" ry="1.8" transform="rotate(3 916.0 651.9)"/><ellipse cx="949.3" cy="646.3" rx="2.9" ry="2.2" transform="rotate(-1 949.3 646.3)"/><ellipse cx="971.4" cy="647.8" rx="2.5" ry="2.0" transform="rotate(-7 971.4 647.8)"/><ellipse cx="982.2" cy="648.7" rx="3.0" ry="1.7" transform="rotate(8 982.2 648.7)"/><ellipse cx="993.8" cy="646.1" rx="3.0" ry="1.8" transform="rotate(-5 993.8 646.1)"/><ellipse cx="1005.9" cy="651.5" rx="2.8" ry="1.7" transform="rotate(0 1005.9 651.5)"/><ellipse cx="1019.4" cy="652.4" rx="3.0" ry="2.2" transform="rotate(9 1019.4 652.4)"/><ellipse cx="1031.2" cy="654.7" rx="3.0" ry="1.8" transform="rotate(-22 1031.2 654.7)"/><ellipse cx="1041.9" cy="654.4" rx="2.2" ry="2.1" transform="rotate(-23 1041.9 654.4)"/><ellipse cx="1056.0" cy="653.1" rx="2.3" ry="1.7" transform="rotate(-7 1056.0 653.1)"/><ellipse cx="1066.7" cy="657.4" rx="2.6" ry="2.2" transform="rotate(-22 1066.7 657.4)"/><ellipse cx="1077.7" cy="655.3" rx="2.8" ry="1.9" transform="rotate(5 1077.7 655.3)"/><ellipse cx="1089.6" cy="653.3" rx="2.1" ry="1.4" transform="rotate(5 1089.6 653.3)"/><ellipse cx="1102.2" cy="653.3" rx="1.9" ry="1.5" transform="rotate(-4 1102.2 653.3)"/><ellipse cx="1111.2" cy="654.9" rx="2.0" ry="1.6" transform="rotate(-8 1111.2 654.9)"/><ellipse cx="892.9" cy="660.9" rx="2.5" ry="1.7" transform="rotate(-3 892.9 660.9)"/><ellipse cx="918.7" cy="660.6" rx="2.5" ry="2.0" transform="rotate(-21 918.7 660.6)"/><ellipse cx="933.0" cy="661.4" rx="2.4" ry="1.9" transform="rotate(-10 933.0 661.4)"/><ellipse cx="955.0" cy="665.2" rx="3.0" ry="2.0" transform="rotate(5 955.0 665.2)"/><ellipse cx="967.5" cy="665.5" rx="2.5" ry="1.8" transform="rotate(7 967.5 665.5)"/><ellipse cx="1018.4" cy="659.5" rx="2.8" ry="2.1" transform="rotate(9 1018.4 659.5)"/><ellipse cx="1027.1" cy="657.4" rx="2.8" ry="1.7" transform="rotate(-23 1027.1 657.4)"/><ellipse cx="1039.9" cy="653.4" rx="2.7" ry="1.7" transform="rotate(-19 1039.9 653.4)"/><ellipse cx="1052.2" cy="657.6" rx="2.3" ry="1.6" transform="rotate(8 1052.2 657.6)"/><ellipse cx="1067.0" cy="657.1" rx="2.7" ry="1.9" transform="rotate(-4 1067.0 657.1)"/><ellipse cx="1101.7" cy="658.4" rx="2.0" ry="1.6" transform="rotate(5 1101.7 658.4)"/><ellipse cx="872.9" cy="670.2" rx="2.9" ry="2.1" transform="rotate(-11 872.9 670.2)"/><ellipse cx="886.8" cy="672.5" rx="2.9" ry="1.8" transform="rotate(0 886.8 672.5)"/><ellipse cx="909.3" cy="668.1" rx="3.1" ry="2.0" transform="rotate(-13 909.3 668.1)"/><ellipse cx="922.6" cy="666.1" rx="3.1" ry="2.0" transform="rotate(-0 922.6 666.1)"/><ellipse cx="934.8" cy="667.4" rx="2.9" ry="1.8" transform="rotate(-11 934.8 667.4)"/><ellipse cx="953.9" cy="666.2" rx="3.1" ry="1.9" transform="rotate(10 953.9 666.2)"/><ellipse cx="967.2" cy="665.9" rx="2.9" ry="1.6" transform="rotate(8 967.2 665.9)"/><ellipse cx="975.5" cy="664.3" rx="2.8" ry="1.6" transform="rotate(8 975.5 664.3)"/><ellipse cx="986.6" cy="665.7" rx="2.5" ry="2.0" transform="rotate(-5 986.6 665.7)"/><ellipse cx="1009.0" cy="665.6" rx="2.6" ry="2.1" transform="rotate(1 1009.0 665.6)"/><ellipse cx="1035.1" cy="671.0" rx="2.4" ry="1.9" transform="rotate(8 1035.1 671.0)"/><ellipse cx="1046.2" cy="672.1" rx="2.7" ry="1.7" transform="rotate(-3 1046.2 672.1)"/><ellipse cx="1059.2" cy="670.9" rx="2.3" ry="1.9" transform="rotate(-2 1059.2 670.9)"/><ellipse cx="1068.9" cy="671.2" rx="2.9" ry="1.9" transform="rotate(10 1068.9 671.2)"/><ellipse cx="1093.0" cy="672.7" rx="1.7" ry="1.6" transform="rotate(-5 1093.0 672.7)"/><ellipse cx="864.8" cy="671.2" rx="2.3" ry="1.9" transform="rotate(-22 864.8 671.2)"/><ellipse cx="876.3" cy="674.6" rx="2.5" ry="1.9" transform="rotate(-18 876.3 674.6)"/><ellipse cx="901.7" cy="678.4" rx="2.4" ry="1.9" transform="rotate(-16 901.7 678.4)"/><ellipse cx="916.2" cy="677.6" rx="2.5" ry="1.9" transform="rotate(1 916.2 677.6)"/><ellipse cx="940.0" cy="678.1" rx="2.6" ry="2.0" transform="rotate(-15 940.0 678.1)"/><ellipse cx="949.6" cy="678.5" rx="2.3" ry="1.8" transform="rotate(0 949.6 678.5)"/><ellipse cx="959.8" cy="679.8" rx="2.9" ry="1.8" transform="rotate(-21 959.8 679.8)"/><ellipse cx="970.0" cy="681.2" rx="3.0" ry="1.9" transform="rotate(3 970.0 681.2)"/><ellipse cx="982.3" cy="678.8" rx="3.0" ry="1.7" transform="rotate(-12 982.3 678.8)"/><ellipse cx="993.8" cy="677.9" rx="2.4" ry="1.9" transform="rotate(3 993.8 677.9)"/><ellipse cx="1028.3" cy="674.6" rx="2.8" ry="2.1" transform="rotate(-23 1028.3 674.6)"/><ellipse cx="1051.0" cy="674.8" rx="2.3" ry="2.0" transform="rotate(-2 1051.0 674.8)"/><ellipse cx="1059.3" cy="670.5" rx="2.9" ry="1.8" transform="rotate(-13 1059.3 670.5)"/><ellipse cx="1074.6" cy="673.4" rx="2.8" ry="2.0" transform="rotate(7 1074.6 673.4)"/><ellipse cx="1084.5" cy="675.0" rx="2.9" ry="2.1" transform="rotate(6 1084.5 675.0)"/><ellipse cx="1098.7" cy="675.3" rx="2.0" ry="1.5" transform="rotate(-10 1098.7 675.3)"/><ellipse cx="1108.0" cy="677.0" rx="1.6" ry="1.4" transform="rotate(-10 1108.0 677.0)"/><ellipse cx="901.3" cy="683.4" rx="2.8" ry="2.0" transform="rotate(-17 901.3 683.4)"/><ellipse cx="912.0" cy="682.6" rx="2.5" ry="1.9" transform="rotate(4 912.0 682.6)"/><ellipse cx="923.2" cy="681.1" rx="2.5" ry="1.9" transform="rotate(8 923.2 681.1)"/><ellipse cx="936.7" cy="679.7" rx="2.9" ry="1.8" transform="rotate(-7 936.7 679.7)"/><ellipse cx="946.6" cy="679.5" rx="2.4" ry="1.6" transform="rotate(-8 946.6 679.5)"/><ellipse cx="960.1" cy="682.5" rx="2.3" ry="1.7" transform="rotate(-14 960.1 682.5)"/><ellipse cx="972.4" cy="683.5" rx="3.1" ry="1.8" transform="rotate(-6 972.4 683.5)"/><ellipse cx="983.9" cy="683.8" rx="3.0" ry="2.1" transform="rotate(-22 983.9 683.8)"/><ellipse cx="993.8" cy="684.5" rx="2.6" ry="2.2" transform="rotate(-4 993.8 684.5)"/><ellipse cx="1005.6" cy="683.6" rx="3.0" ry="1.7" transform="rotate(4 1005.6 683.6)"/><ellipse cx="1039.6" cy="688.5" rx="2.8" ry="1.7" transform="rotate(-11 1039.6 688.5)"/><ellipse cx="1052.9" cy="692.3" rx="2.2" ry="1.8" transform="rotate(-0 1052.9 692.3)"/><ellipse cx="1079.3" cy="690.9" rx="2.5" ry="1.8" transform="rotate(-6 1079.3 690.9)"/><ellipse cx="1087.6" cy="687.5" rx="1.7" ry="1.4" transform="rotate(1 1087.6 687.5)"/><ellipse cx="1098.9" cy="690.0" rx="1.7" ry="1.7" transform="rotate(-22 1098.9 690.0)"/><ellipse cx="878.4" cy="687.5" rx="2.3" ry="2.2" transform="rotate(-10 878.4 687.5)"/><ellipse cx="889.3" cy="691.4" rx="2.5" ry="1.8" transform="rotate(-11 889.3 691.4)"/><ellipse cx="900.7" cy="691.3" rx="2.9" ry="2.0" transform="rotate(-4 900.7 691.3)"/><ellipse cx="913.4" cy="692.6" rx="2.3" ry="1.8" transform="rotate(-7 913.4 692.6)"/><ellipse cx="939.0" cy="698.9" rx="2.7" ry="1.7" transform="rotate(-0 939.0 698.9)"/><ellipse cx="951.7" cy="697.4" rx="2.4" ry="2.2" transform="rotate(-3 951.7 697.4)"/><ellipse cx="961.9" cy="695.1" rx="2.8" ry="1.8" transform="rotate(8 961.9 695.1)"/><ellipse cx="973.0" cy="697.2" rx="2.3" ry="2.1" transform="rotate(-6 973.0 697.2)"/><ellipse cx="983.7" cy="697.1" rx="3.1" ry="2.1" transform="rotate(-4 983.7 697.1)"/><ellipse cx="993.0" cy="697.9" rx="2.4" ry="1.9" transform="rotate(4 993.0 697.9)"/><ellipse cx="1013.8" cy="696.4" rx="2.5" ry="2.0" transform="rotate(1 1013.8 696.4)"/><ellipse cx="1040.8" cy="690.0" rx="2.7" ry="1.7" transform="rotate(-7 1040.8 690.0)"/><ellipse cx="1051.1" cy="689.7" rx="2.2" ry="2.0" transform="rotate(-20 1051.1 689.7)"/><ellipse cx="1064.3" cy="689.3" rx="2.8" ry="2.0" transform="rotate(2 1064.3 689.3)"/><ellipse cx="1075.3" cy="688.6" rx="3.0" ry="1.8" transform="rotate(-10 1075.3 688.6)"/><ellipse cx="1088.7" cy="691.7" rx="1.8" ry="1.7" transform="rotate(-14 1088.7 691.7)"/><ellipse cx="1098.9" cy="691.5" rx="1.9" ry="1.6" transform="rotate(-14 1098.9 691.5)"/><ellipse cx="891.5" cy="706.4" rx="3.0" ry="1.9" transform="rotate(3 891.5 706.4)"/><ellipse cx="905.9" cy="703.6" rx="2.3" ry="2.1" transform="rotate(-21 905.9 703.6)"/><ellipse cx="918.9" cy="703.1" rx="2.5" ry="1.8" transform="rotate(-23 918.9 703.1)"/><ellipse cx="929.6" cy="701.0" rx="2.7" ry="1.6" transform="rotate(-24 929.6 701.0)"/><ellipse cx="940.9" cy="696.9" rx="3.1" ry="1.9" transform="rotate(-18 940.9 696.9)"/><ellipse cx="977.7" cy="700.3" rx="2.4" ry="2.1" transform="rotate(-23 977.7 700.3)"/><ellipse cx="985.7" cy="699.2" rx="3.0" ry="2.0" transform="rotate(-20 985.7 699.2)"/><ellipse cx="1021.0" cy="700.4" rx="2.5" ry="2.0" transform="rotate(6 1021.0 700.4)"/><ellipse cx="1034.8" cy="702.1" rx="2.8" ry="1.8" transform="rotate(-3 1034.8 702.1)"/><ellipse cx="1044.1" cy="707.6" rx="2.7" ry="1.6" transform="rotate(-4 1044.1 707.6)"/><ellipse cx="1069.3" cy="707.5" rx="2.7" ry="1.7" transform="rotate(6 1069.3 707.5)"/><ellipse cx="1082.1" cy="703.0" rx="2.5" ry="2.2" transform="rotate(-8 1082.1 703.0)"/><ellipse cx="1091.1" cy="705.6" rx="2.0" ry="1.7" transform="rotate(-7 1091.1 705.6)"/><ellipse cx="894.6" cy="708.2" rx="2.8" ry="1.9" transform="rotate(6 894.6 708.2)"/><ellipse cx="903.0" cy="707.2" rx="2.6" ry="1.9" transform="rotate(-16 903.0 707.2)"/><ellipse cx="914.5" cy="708.3" rx="2.7" ry="2.1" transform="rotate(-17 914.5 708.3)"/><ellipse cx="926.0" cy="711.1" rx="2.8" ry="1.9" transform="rotate(-16 926.0 711.1)"/><ellipse cx="949.2" cy="712.2" rx="2.9" ry="1.6" transform="rotate(-11 949.2 712.2)"/><ellipse cx="990.3" cy="714.7" rx="3.0" ry="1.7" transform="rotate(-11 990.3 714.7)"/><ellipse cx="1011.6" cy="712.3" rx="2.4" ry="1.9" transform="rotate(-17 1011.6 712.3)"/><ellipse cx="1022.6" cy="711.8" rx="3.1" ry="2.0" transform="rotate(-24 1022.6 711.8)"/><ellipse cx="1033.6" cy="708.8" rx="2.8" ry="2.1" transform="rotate(-4 1033.6 708.8)"/><ellipse cx="1044.9" cy="706.5" rx="2.5" ry="2.1" transform="rotate(-17 1044.9 706.5)"/><ellipse cx="1066.0" cy="703.9" rx="2.6" ry="2.2" transform="rotate(-1 1066.0 703.9)"/><ellipse cx="896.8" cy="718.9" rx="2.2" ry="1.8" transform="rotate(-17 896.8 718.9)"/><ellipse cx="933.4" cy="714.2" rx="2.3" ry="1.7" transform="rotate(-15 933.4 714.2)"/><ellipse cx="946.1" cy="714.2" rx="2.4" ry="1.8" transform="rotate(-13 946.1 714.2)"/><ellipse cx="955.8" cy="711.7" rx="2.7" ry="2.1" transform="rotate(9 955.8 711.7)"/><ellipse cx="965.7" cy="715.6" rx="2.8" ry="2.0" transform="rotate(8 965.7 715.6)"/><ellipse cx="992.1" cy="715.9" rx="2.5" ry="1.9" transform="rotate(-15 992.1 715.9)"/><ellipse cx="1014.2" cy="717.8" rx="2.6" ry="1.7" transform="rotate(-5 1014.2 717.8)"/><ellipse cx="1035.9" cy="721.2" rx="2.2" ry="1.9" transform="rotate(-4 1035.9 721.2)"/><ellipse cx="1056.2" cy="725.7" rx="2.8" ry="1.7" transform="rotate(-9 1056.2 725.7)"/><ellipse cx="1069.1" cy="726.2" rx="3.0" ry="2.1" transform="rotate(-3 1069.1 726.2)"/><ellipse cx="1080.3" cy="722.5" rx="2.9" ry="2.1" transform="rotate(-12 1080.3 722.5)"/><ellipse cx="1092.6" cy="719.3" rx="1.7" ry="1.5" transform="rotate(9 1092.6 719.3)"/><ellipse cx="904.8" cy="726.7" rx="2.3" ry="2.0" transform="rotate(-8 904.8 726.7)"/><ellipse cx="1053.5" cy="725.8" rx="2.6" ry="2.0" transform="rotate(-11 1053.5 725.8)"/><ellipse cx="1063.6" cy="725.4" rx="2.3" ry="1.6" transform="rotate(-15 1063.6 725.4)"/><ellipse cx="1072.6" cy="725.2" rx="2.2" ry="1.9" transform="rotate(-8 1072.6 725.2)"/><ellipse cx="1081.5" cy="721.2" rx="2.5" ry="1.8" transform="rotate(-3 1081.5 721.2)"/></g></g></g></g><path d="M761,404.5 H1482 M761.5,404 V882" fill="none" stroke="#E6F6E6" stroke-width="1" stroke-dasharray="2.5 2.5"/><path d="M1483.5,404 V884 M761,883.5 H1484" fill="none" stroke="#777" stroke-width="1" stroke-dasharray="2.5 2.5"/></svg>
<div id="vscroll" class="abs"></div><div class="abs sbtn" style="top:198px"></div><div id="sthumb" class="abs"></div><div class="abs sbtn" style="top:903px"></div>
<svg class="abs" style="left:1898px;top:198px" width="19" height="19" viewBox="1898 198 19 19" ><path d="M1902.6,209.4 H1911.4 L1907,204.6 Z" fill="#222"/></svg>
<svg class="abs" style="left:1898px;top:903px" width="19" height="19" viewBox="1898 903 19 19" ><path d="M1902.6,910.2 H1911.4 L1907,914.8 Z" fill="#222"/></svg>
<svg class="abs" style="left:1898px;top:924px" width="19" height="40" viewBox="1898 924 19 40" ><path d="M1907.5,925.8 L1913.2,933 H1910.6 L1913.6,940.8 H1901.4 L1904.4,933 H1901.8 Z" fill="#6A6A6A"/><path d="M1907.5,962 L1913.2,954.8 H1910.6 L1913.6,947.4 H1901.4 L1904.4,954.8 H1901.8 Z" fill="#6A6A6A"/></svg>
<div id="statusline" class="abs"></div><div id="status" class="abs"></div>
<span class="t " style="left:8.30px;top:1000.91px;font-size:13.10px;color:#3A3A3A;letter-spacing:-0.040px;">Slide 2 of 2</span>
<span class="t " style="left:137.60px;top:1000.91px;font-size:13.10px;color:#3A3A3A;letter-spacing:-0.267px;">English (India)</span>
<span class="t " style="left:261.40px;top:1000.91px;font-size:13.10px;color:#3A3A3A;letter-spacing:-0.203px;">Accessibility: Investigate</span>
<span class="t " style="left:1306.20px;top:1000.91px;font-size:13.10px;color:#3A3A3A;letter-spacing:0.045px;">Notes</span>
<span class="t " style="left:1387.70px;top:1000.91px;font-size:13.10px;color:#3A3A3A;letter-spacing:-0.347px;">Comments</span>
<span class="t " style="left:1852.20px;top:1000.91px;font-size:13.10px;color:#3A3A3A;letter-spacing:-0.960px;">85%</span>
<svg class="abs" style="left:96px;top:997px" width="22" height="18" viewBox="96 997 22 18" ><path d="M98.5,1000 H105.6 V1011.6 H98.5 Z M105.6,1000 H113 M105.6,1011.6 V1013.6" fill="none" stroke="#5A5A5A" stroke-width="1"/><path d="M108.6,1006.4 L110.8,1008.8 L115.6,1001.6" fill="none" stroke="#5A5A5A" stroke-width="1.2"/><path d="M107.6,1001.6 H113.4 V1011.6 H105.6" fill="none" stroke="#5A5A5A" stroke-width="0.8" opacity="0.6"/></svg>
<svg class="abs" style="left:236px;top:997px" width="24" height="18" viewBox="236 997 24 18" ><path d="M245.2,1000.4 A6.6,6.6 0 0 0 245.4,1013.2" fill="none" stroke="#5A5A5A" stroke-width="1.2" stroke-dasharray="3.2 1.6"/><path d="M247.6,999.4 V1007.4 M245,1005 L247.6,1007.8 L250.4,1005 M251.4,1004.6 H254.4" fill="none" stroke="#333" stroke-width="1.2"/><path d="M250.6,1008.6 L256.6,1014.6 M256.6,1008.6 L250.6,1014.6" stroke="#333" stroke-width="1.6"/></svg>
<svg class="abs" style="left:1285px;top:998px" width="18" height="16" viewBox="1285 998 18 16" ><path d="M1289.4,1003.6 H1297.4 L1293.4,999.6 Z" fill="#5A5A5A"/><path d="M1287.2,1006.4 H1299.6 M1287.2,1009.4 H1299.6 M1287.2,1012.4 H1295.6" stroke="#5A5A5A" stroke-width="1"/></svg>
<svg class="abs" style="left:1364px;top:998px" width="22" height="18" viewBox="1364 998 22 18" ><path d="M1367,999.4 H1382.4 Q1383.8,999.4 1383.8,1000.8 V1008.4 Q1383.8,1009.8 1382.4,1009.8 H1373.6 L1369.8,1013.4 V1009.8 H1367 Q1365.8,1009.8 1365.8,1008.4 V1000.8 Q1365.8,999.4 1367,999.4 Z" fill="#5A5A5A"/></svg>
<div class="abs" style="left:1473px;top:994px;width:50px;height:21px;background:#C6C6C6"></div>
<svg class="abs" style="left:1487px;top:998px" width="22" height="17" viewBox="1487 998 22 17" ><rect x="1489.6" y="999.8" width="16" height="15.4" fill="none" stroke="#5A5A5A" stroke-width="1.1"/><path d="M1493.2,999.8 V1015 M1493.2,1009.6 H1505.6" stroke="#5A5A5A" stroke-width="1.1" fill="none"/><rect x="1496.2" y="1002.6" width="6.6" height="4.2" fill="none" stroke="#5A5A5A" stroke-width="1.1"/></svg>
<svg class="abs" style="left:1537px;top:998px" width="20" height="16" viewBox="1537 998 20 16" ><rect x="1539.6" y="999.8" width="6" height="4.6" fill="none" stroke="#5A5A5A" stroke-width="1.1"/><rect x="1539.6" y="1008.4" width="6" height="4.6" fill="none" stroke="#5A5A5A" stroke-width="1.1"/><rect x="1548.8" y="999.8" width="6" height="4.6" fill="none" stroke="#5A5A5A" stroke-width="1.1"/><rect x="1548.8" y="1008.4" width="6" height="4.6" fill="none" stroke="#5A5A5A" stroke-width="1.1"/></svg>
<svg class="abs" style="left:1586px;top:998px" width="22" height="17" viewBox="1586 998 22 17" ><path d="M1597.4,1001.4 Q1593.4,999 1589.4,1000.2 V1011.6 Q1593.4,1010.6 1597.4,1012.8 Q1601.4,1010.6 1605.4,1011.6 V1000.2 Q1601.4,999 1597.4,1001.4 Z M1597.4,1001.4 V1014.6" fill="none" stroke="#5A5A5A" stroke-width="1"/><path d="M1591.2,1003.2 H1595.6 M1591.2,1005.6 H1595.6 M1591.2,1008 H1595.6 M1599.2,1003.2 H1603.6 M1599.2,1005.6 H1603.6 M1599.2,1008 H1603.6" stroke="#5A5A5A" stroke-width="0.9"/></svg>
<svg class="abs" style="left:1637px;top:998px" width="22" height="17" viewBox="1637 998 22 17" ><path d="M1639.2,1000.4 H1655.6" stroke="#5A5A5A" stroke-width="1.6"/><path d="M1641.6,1001 V1008.2 H1653.2 V1001 M1647.4,1008.2 V1013.6 M1644.2,1013.8 H1650.6" fill="none" stroke="#5A5A5A" stroke-width="1.1"/></svg>
<svg class="abs" style="left:1678px;top:998px" width="160" height="17" viewBox="1678 998 160 17" ><path d="M1680,1007 H1689.2 M1696,1007 H1820.8 M1826.9,1007 H1836.5 M1831.7,1002.2 V1011.8 M1758.4,1003.4 V1010.6" stroke="#5A5A5A" stroke-width="1.1"/><rect x="1746" y="999.6" width="6" height="15" fill="#444"/></svg>
<svg class="abs" style="left:1894px;top:998px" width="18" height="17" viewBox="1894 998 18 17" ><rect x="1896.8" y="1000.8" width="11.6" height="11.6" fill="none" stroke="#5A5A5A" stroke-width="1.1"/><path d="M1902.6,1001.6 V1005 M1902.6,1008.4 V1011.8 M1897.4,1006.6 H1900.8 M1904.4,1006.6 H1907.8" stroke="#5A5A5A" stroke-width="0.9"/></svg>

</body></html>
